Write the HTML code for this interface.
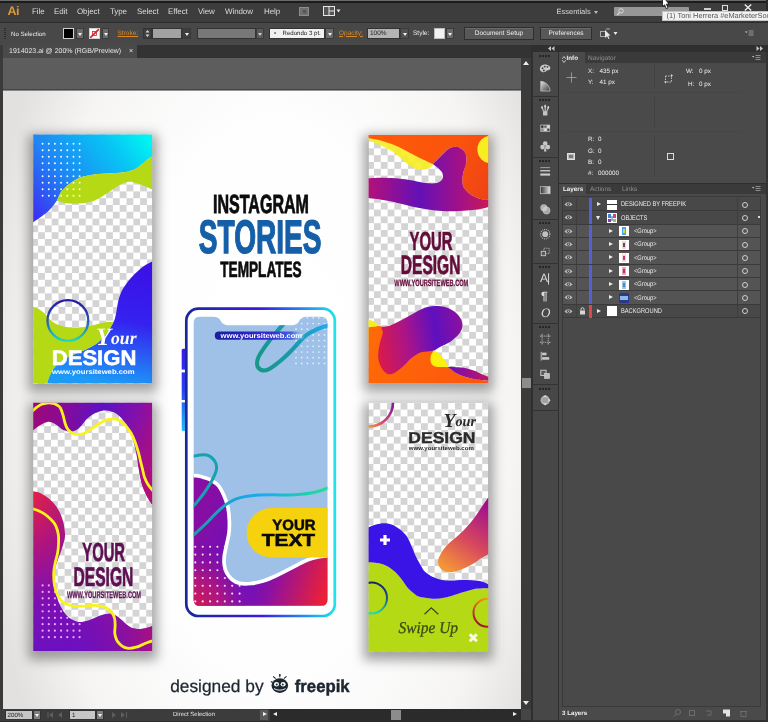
<!DOCTYPE html>
<html lang="en">
<head>
<meta charset="utf-8">
<title>Adobe Illustrator - 1914023.ai</title>
<style>
*{box-sizing:border-box;margin:0;padding:0}
html,body{text-rendering:geometricPrecision;width:768px;height:722px;overflow:hidden;background:#474747;font-family:"Liberation Sans",sans-serif;font-size:7px;color:#e4e4e4}
.abs{position:absolute}
#app{position:relative;width:768px;height:722px;overflow:hidden;background:#474747;opacity:.999}
/* top strips */
#topstrip{left:0;top:0;width:768px;height:3px;background:#1c1c1c;border-top:1.500px solid #6a6a6a}
#menubar{left:0;top:2.500px;width:768px;height:20px;background:#3d3d3d}
#menubar span{position:absolute;top:4px;font-size:8px;color:#dcdcdc;letter-spacing:-0.1px}
#ctrlbar{left:0;top:22px;width:768px;height:23px;background:#484848;border-top:1.500px solid #2c2c2c}
#tabbar{left:0;top:45px;width:531px;height:13px;background:#333}
#tab{left:3px;top:45px;width:134px;height:13px;background:#4a4a4a;font-size:7px;color:#e6e6e6;line-height:13px;padding-left:6px;white-space:nowrap}
#canvas{left:3px;top:58px;width:518px;height:651px;background:#5d5d5d;overflow:hidden}
#leftedge{left:0;top:45px;width:2.700px;height:677px;background:#3a3a3a}
#vscroll{left:521px;top:58px;width:10px;height:651px;background:#3b3b3b}
#statusbar{left:0;top:709px;width:531px;height:13px;background:#3c3c3c}
#dock{left:531px;top:45px;width:237px;height:677px;background:#323232}
#iconcol{left:533px;top:52px;width:25px;height:670px;background:#474747}
.panel{background:#4a4a4a}
.lbl{position:absolute;white-space:nowrap}

.dd{position:absolute;top:28px;height:11px;background:#6a6a6a;border:1px solid #3a3a3a}
.dd:after{content:"";position:absolute;left:50%;top:4px;margin-left:-2px;border:2px solid transparent;border-top:3px solid #f0f0f0;border-bottom:0}
.fld{position:absolute;top:28px;height:11px;border:1px solid #333}
.orange{position:absolute;top:29.800px;font-size:6.5px;color:#d88a2a;text-decoration:underline;white-space:nowrap}
.btn{position:absolute;top:27px;height:13px;background:#585858;border:1px solid #2e2e2e;box-shadow:inset 0 1px 0 #6a6a6a;font-size:6.5px;color:#f0f0f0;text-align:center;line-height:11px;white-space:nowrap}
.ct{position:absolute;font-size:6.5px;color:#ececec;white-space:nowrap}

.pt{position:absolute;font-size:6.3px;color:#f0f0f0;white-space:nowrap}
.dim{color:#8f8f8f;font-size:6.5px}
.row{position:absolute;left:563px;width:197px;height:13.35px;border-bottom:1px solid #3a3a3a;background:#484848}
.row.g{background:#545454}
.row .nm{position:absolute;top:3.3px;font-size:6.8px;color:#ededed;white-space:nowrap;transform:scaleX(.84);transform-origin:0 50%}
.row .bar{position:absolute;left:26px;top:0;width:3px;height:13px;background:#5560d4}
.row .eye{position:absolute;left:1px;top:3px;opacity:.8}
.row .tri{position:absolute;top:4px;border:2.5px solid transparent;border-left:4px solid #ececec;border-right:0}
.row .trid{position:absolute;top:5px;border:2.5px solid transparent;border-top:4px solid #ececec;border-bottom:0}
.row .th{position:absolute;top:1.5px;width:10px;height:10px;background:#fff;overflow:hidden}
.row .circ{position:absolute;left:178.5px;top:3.5px;width:6px;height:6px;border:1px solid #d0d0d0;border-radius:50%}
.row .vs{position:absolute;left:174px;top:0;width:1px;height:13px;background:#3d3d3d}
.row .vl{position:absolute;top:0;width:1px;height:13px;background:#3f3f3f}
</style>
</head>
<body>
<div id="app">
  <div id="topstrip" class="abs"></div>
  <div id="menubar" class="abs">
    <span style="left:7.500px;top:1.500px;font-size:12.500px;font-weight:bold;color:#dc9a3c;letter-spacing:-0.500px">Ai</span>
    <span style="left:32px">File</span>
    <span style="left:54px">Edit</span>
    <span style="left:77px">Object</span>
    <span style="left:110px">Type</span>
    <span style="left:137px">Select</span>
    <span style="left:168px">Effect</span>
    <span style="left:198px">View</span>
    <span style="left:225px">Window</span>
    <span style="left:264px">Help</span>
  </div>

  <div class="abs" style="left:299px;top:7px;width:10px;height:9px;background:#6e6e6e;border:1px solid #8c8c8c"><div style="position:absolute;left:3px;top:2px;width:3px;height:3px;background:#555"></div></div>
  <svg class="abs" style="left:323px;top:6px" width="20" height="10" viewBox="0 0 20 10"><rect x="0.5" y="0.5" width="11" height="9" fill="#555" stroke="#e6e6e6"/><path d="M6 0.5 v9 M6 5 h5.5" stroke="#e6e6e6" stroke-width="1"/><path d="M13.5 3.5 h4 l-2 3z" fill="#e6e6e6"/></svg>
  <div class="ct" style="left:556.5px;top:7px;font-size:7.5px;color:#d8d8d8">Essentials</div>
  <div class="abs" style="left:594px;top:11px;border:2px solid transparent;border-top:3px solid #bdbdbd;border-bottom:0"></div>
  <div class="abs" style="left:614px;top:7px;width:75px;height:9px;background:#979797;border-radius:1px"></div>
  <svg class="abs" style="left:616px;top:7px" width="9" height="9" viewBox="0 0 9 9"><circle cx="5" cy="3.8" r="2.2" fill="none" stroke="#d9d9d9" stroke-width="1"/><path d="M3.5 5.5 L1.2 8" stroke="#d9d9d9" stroke-width="1.2"/></svg>
  <div class="abs" style="left:704px;top:8px;width:7px;height:2px;background:#d0d0d0"></div>
  <div class="abs" style="left:721.5px;top:4.5px;width:6.5px;height:6px;border:1.5px solid #e0e0e0"></div>
  <svg class="abs" style="left:744px;top:4px" width="8" height="7" viewBox="0 0 8 7"><path d="M0.8 0.5 L7.2 6.5 M7.2 0.5 L0.8 6.5" stroke="#ededed" stroke-width="1.4"/></svg>
  <div class="abs" style="left:766px;top:0;width:2px;height:45px;background:#2b2b2b"></div>
  <div class="abs" style="left:662px;top:11px;width:106px;height:10px;background:#f1f1f1;border:1px solid #c4c4c4;border-right:0;font-size:7.4px;line-height:8.5px;color:#575757;padding-left:3.5px;white-space:nowrap;overflow:hidden">(1) Toni Herrera #eMarketerSoc</div>
  <svg class="abs" style="left:661px;top:0" width="9" height="10" viewBox="0 0 9 10"><path d="M1.5 -4 L1.5 6.5 L3.6 4.8 L5.2 8.6 L7 7.8 L5.3 4.2 L8 4 Z" fill="#fff" stroke="#111" stroke-width="0.8"/></svg>
  <div id="ctrlbar" class="abs"></div>
  
  <div class="abs" style="left:4px;top:28px;width:2px;height:12px;background:repeating-linear-gradient(#2c2c2c 0 1px,#484848 1px 2px)"></div>
  <div class="ct" style="left:11px;top:30.500px;font-size:6.100px">No Selection</div>
  <div class="fld" style="left:63px;width:11px;background:#000;border-color:#cfcfcf"></div>
  <div class="dd" style="left:76px;width:8px"></div>
  <div class="fld" style="left:89px;width:11px;background:#fff;border-color:#cfcfcf;overflow:hidden"><svg width="9" height="9" viewBox="0 0 9 9" style="position:absolute;left:0;top:0"><line x1="0" y1="9" x2="9" y2="0" stroke="#d8232a" stroke-width="1.6"/><rect x="2.5" y="2.5" width="4" height="4" fill="none" stroke="#d8232a" stroke-width="0.8"/></svg></div>
  <div class="dd" style="left:102px;width:7px"></div>
  <div class="orange" style="left:117.5px">Stroke:</div>
  <div class="fld" style="left:143px;width:9px;background:#3e3e3e"><svg width="7" height="9" viewBox="0 0 7 9" style="position:absolute;left:0;top:0"><path d="M1.5 3.5 L3.5 1 L5.5 3.5Z M1.5 5.5 L3.5 8 L5.5 5.5Z" fill="#d8d8d8"/></svg></div>
  <div class="fld" style="left:152px;width:30px;background:#a2a2a2"></div>
  <div class="dd" style="left:182px;width:9px;background:#3e3e3e"></div>
  <div class="fld" style="left:197px;width:59px;background:#787878"></div>
  <div class="dd" style="left:256px;width:8px;background:#5e5e5e;opacity:.8"></div>
  <div class="fld" style="left:269px;width:56px;background:#f1f1f1;color:#222;font-size:6.100px;line-height:9px;white-space:nowrap"><span style="position:absolute;left:4px">•</span><span style="position:absolute;left:12.500px">Redondo 3 pt.</span></div>
  <div class="dd" style="left:325px;width:9px"></div>
  <div class="orange" style="left:339px">Opacity:</div>
  <div class="fld" style="left:367px;width:33px;background:#b4b4b4;color:#1a1a1a;font-size:6.5px;line-height:9px;padding-left:2px">100%</div>
  <div class="dd" style="left:400px;width:9px;background:#505050"></div>
  <div class="ct" style="left:413px;top:30.300px">Style:</div>
  <div class="fld" style="left:434px;width:11px;background:#f2f2f2;border-color:#bbb"></div>
  <div class="dd" style="left:446px;width:8px"></div>
  <div class="btn" style="left:464px;width:70px">Document Setup</div>
  <div class="btn" style="left:540px;width:52px">Preferences</div>
  <svg class="abs" style="left:599px;top:28px" width="22" height="12" viewBox="0 0 22 12"><rect x="1.5" y="3.5" width="5" height="5" fill="none" stroke="#aaa" stroke-width="1"/><path d="M6 2 L6 10 L8 8.2 L9.5 11 L10.5 10.5 L9.2 7.8 L11.5 7.5Z" fill="#e8e8e8"/><path d="M7 1 h4 M9 1 v0" stroke="#aaa" stroke-width="1"/><path d="M14.5 4 h4 l-2 3z" fill="#e8e8e8"/></svg>
  <svg class="abs" style="left:745px;top:30px" width="10" height="7" viewBox="0 0 10 7"><path d="M0 1.5 h2.4 l-1.2 1.6z" fill="#ddd"/><path d="M3.5 1 h5 M3.5 3 h5 M3.5 5 h5" stroke="#b8b8b8" stroke-width="0.7"/></svg>
  <div id="tabbar" class="abs"></div>
  <div id="tab" class="abs">1914023.ai @ 200% (RGB/Preview) &nbsp;&nbsp;&nbsp;×</div>
  <div id="canvas" class="abs">
    <!--ART-START-->
<svg style="position:absolute;left:0;top:0;opacity:0.999" width="518" height="651" viewBox="3 58 518 651" font-family="Liberation Sans, sans-serif">
<defs>
<radialGradient id="bg" gradientUnits="userSpaceOnUse" cx="275" cy="400" r="300" gradientTransform="translate(275,400) scale(1,1.85) translate(-275,-400)"><stop offset="0" stop-color="#ffffff"/><stop offset="0.5" stop-color="#fefefe"/><stop offset="0.8" stop-color="#f6f5f4"/><stop offset="1" stop-color="#e3e1df"/></radialGradient>
<filter id="sh" x="-30%" y="-15%" width="160%" height="130%"><feGaussianBlur stdDeviation="6"/></filter>
<pattern id="ck1" patternUnits="userSpaceOnUse" x="38.1" y="232.2" width="13.600" height="13.600"><rect width="13.600" height="13.600" fill="#fff"/><rect width="6.800" height="6.800" fill="#d4d4d4"/><rect x="6.800" y="6.800" width="6.800" height="6.800" fill="#d4d4d4"/></pattern>
<pattern id="ck2" patternUnits="userSpaceOnUse" x="37.4" y="433" width="13.600" height="13.600"><rect width="13.600" height="13.600" fill="#fff"/><rect width="6.800" height="6.800" fill="#d4d4d4"/><rect x="6.800" y="6.800" width="6.800" height="6.800" fill="#d4d4d4"/></pattern>
<pattern id="ck3" patternUnits="userSpaceOnUse" x="367.2" y="148.4" width="13.600" height="13.600"><rect width="13.600" height="13.600" fill="#fff"/><rect width="6.800" height="6.800" fill="#d4d4d4"/><rect x="6.800" y="6.800" width="6.800" height="6.800" fill="#d4d4d4"/></pattern>
<pattern id="ck4" patternUnits="userSpaceOnUse" x="373.4" y="402.8" width="13.600" height="13.600"><rect width="13.600" height="13.600" fill="#fff"/><rect width="6.800" height="6.800" fill="#d4d4d4"/><rect x="6.800" y="6.800" width="6.800" height="6.800" fill="#d4d4d4"/></pattern>
<clipPath id="c1"><rect x="33.2" y="134.6" width="118.9" height="248.9"/></clipPath>
<clipPath id="c2"><rect x="33.2" y="402.8" width="118.9" height="248.2"/></clipPath>
<clipPath id="c3"><rect x="368.6" y="135" width="119.6" height="248"/></clipPath>
<clipPath id="c4"><rect x="368.6" y="402.8" width="119.6" height="248.4"/></clipPath>
<clipPath id="scr"><path id="scrp" d="M199.500 316.700 H213 Q219 316.700 220.500 320.500 Q222.500 325.200 229 325.200 H291 Q297.500 325.200 299.500 320.500 Q301 316.700 307 316.700 H321.500 Q327.500 316.700 327.500 322.700 V599.700 Q327.500 605.700 321.500 605.700 H199.500 Q193.700 605.700 193.700 599.700 V322.700 Q193.700 316.700 199.500 316.700Z"/></clipPath>
<linearGradient id="g1a" gradientUnits="userSpaceOnUse" x1="40" y1="225" x2="150" y2="140"><stop offset="0" stop-color="#3c2ef2"/><stop offset="0.35" stop-color="#1e86f4"/><stop offset="0.75" stop-color="#08c4f4"/><stop offset="1" stop-color="#00f6f2"/></linearGradient>
<linearGradient id="g1b" gradientUnits="userSpaceOnUse" x1="130" y1="270" x2="110" y2="383"><stop offset="0" stop-color="#3a12e6"/><stop offset="0.45" stop-color="#3522f0"/><stop offset="1" stop-color="#1c9af6"/></linearGradient>
<linearGradient id="g1c" gradientUnits="userSpaceOnUse" x1="68" y1="299" x2="68" y2="342"><stop offset="0" stop-color="#2a169c"/><stop offset="0.5" stop-color="#2a56b8"/><stop offset="1" stop-color="#1fe0c0"/></linearGradient>
<linearGradient id="g2a" gradientUnits="userSpaceOnUse" x1="33" y1="420" x2="153" y2="440"><stop offset="0" stop-color="#9c0878"/><stop offset="0.2" stop-color="#8c0a92"/><stop offset="0.55" stop-color="#5c12c4"/><stop offset="0.85" stop-color="#8610a8"/><stop offset="1" stop-color="#a20e8c"/></linearGradient>
<linearGradient id="g2a2" gradientUnits="userSpaceOnUse" x1="140" y1="420" x2="150" y2="505"><stop offset="0" stop-color="#a80e80" stop-opacity="0"/><stop offset="1" stop-color="#b80e70" stop-opacity="1"/></linearGradient>
<linearGradient id="g2b" gradientUnits="userSpaceOnUse" x1="40" y1="495" x2="75" y2="650"><stop offset="0" stop-color="#e0204a"/><stop offset="0.3" stop-color="#b0147c"/><stop offset="0.65" stop-color="#7c10b2"/><stop offset="1" stop-color="#6a10c0"/></linearGradient>
<linearGradient id="g2c" gradientUnits="userSpaceOnUse" x1="62" y1="645" x2="153" y2="628"><stop offset="0" stop-color="#7010b8" stop-opacity="0"/><stop offset="1" stop-color="#aa1080" stop-opacity="1"/></linearGradient>
<linearGradient id="g3o" gradientUnits="userSpaceOnUse" x1="369" y1="140" x2="488" y2="200"><stop offset="0" stop-color="#ff5a08"/><stop offset="0.6" stop-color="#fb540c"/><stop offset="1" stop-color="#ee4216"/></linearGradient>
<linearGradient id="g3p" gradientUnits="userSpaceOnUse" x1="369" y1="190" x2="488" y2="190"><stop offset="0" stop-color="#b4107a"/><stop offset="0.42" stop-color="#6410b8"/><stop offset="0.75" stop-color="#a0108a"/><stop offset="1" stop-color="#c81a58"/></linearGradient>
<linearGradient id="g3q" gradientUnits="userSpaceOnUse" x1="378" y1="345" x2="463" y2="330"><stop offset="0" stop-color="#d81a4c"/><stop offset="0.35" stop-color="#a8148a"/><stop offset="0.68" stop-color="#5e10be"/><stop offset="1" stop-color="#8c10a0"/></linearGradient>
<linearGradient id="g3t" gradientUnits="userSpaceOnUse" x1="447" y1="370" x2="489" y2="378"><stop offset="0" stop-color="#6a10b4"/><stop offset="0.5" stop-color="#9a1090"/><stop offset="1" stop-color="#c01862"/></linearGradient>
<linearGradient id="g3r" gradientUnits="userSpaceOnUse" x1="369" y1="330" x2="488" y2="383"><stop offset="0" stop-color="#ff6a08"/><stop offset="1" stop-color="#fb560c"/></linearGradient>
<linearGradient id="g4b" gradientUnits="userSpaceOnUse" x1="445" y1="568" x2="488" y2="505"><stop offset="0" stop-color="#f49638"/><stop offset="0.45" stop-color="#d84a5c"/><stop offset="1" stop-color="#a00e8e"/></linearGradient>
<linearGradient id="g4r1" gradientUnits="userSpaceOnUse" x1="390" y1="404" x2="369" y2="428"><stop offset="0" stop-color="#8a1a9c"/><stop offset="0.6" stop-color="#d8506a"/><stop offset="1" stop-color="#f4983a"/></linearGradient>
<linearGradient id="g4r2" gradientUnits="userSpaceOnUse" x1="372" y1="582" x2="372" y2="614"><stop offset="0" stop-color="#1a2468"/><stop offset="0.55" stop-color="#1e5a8a"/><stop offset="1" stop-color="#1fe0b8"/></linearGradient>
<linearGradient id="g4r3" gradientUnits="userSpaceOnUse" x1="487" y1="599" x2="474" y2="622"><stop offset="0" stop-color="#f4961a"/><stop offset="1" stop-color="#9c1430"/></linearGradient>
<linearGradient id="gph" gradientUnits="userSpaceOnUse" x1="186" y1="460" x2="336" y2="460"><stop offset="0" stop-color="#18289c"/><stop offset="0.5" stop-color="#3a1ae4"/><stop offset="0.8" stop-color="#2090f0"/><stop offset="1" stop-color="#1fe6ea"/></linearGradient>
<linearGradient id="gpb" gradientUnits="userSpaceOnUse" x1="183" y1="349" x2="183" y2="431"><stop offset="0" stop-color="#3c18ea"/><stop offset="0.5" stop-color="#2a40f2"/><stop offset="1" stop-color="#1fc0f4"/></linearGradient>
<linearGradient id="gpt" gradientUnits="userSpaceOnUse" x1="258" y1="350" x2="327" y2="326"><stop offset="0" stop-color="#16988a"/><stop offset="0.5" stop-color="#1a9ab0"/><stop offset="1" stop-color="#22a8ee"/></linearGradient>
<linearGradient id="gpl" gradientUnits="userSpaceOnUse" x1="194" y1="500" x2="327" y2="490"><stop offset="0" stop-color="#18a0a8"/><stop offset="0.5" stop-color="#1aaaf0"/><stop offset="1" stop-color="#20e090"/></linearGradient>
<linearGradient id="gpp" gradientUnits="userSpaceOnUse" x1="194" y1="540" x2="327" y2="585"><stop offset="0" stop-color="#860ea4"/><stop offset="0.42" stop-color="#6810c2"/><stop offset="0.62" stop-color="#8a10a4"/><stop offset="1" stop-color="#ea2038"/></linearGradient>
<radialGradient id="gpp2" gradientUnits="userSpaceOnUse" cx="192" cy="610" r="62"><stop offset="0" stop-color="#d81a4c" stop-opacity="1"/><stop offset="0.5" stop-color="#c4186a" stop-opacity="0.7"/><stop offset="1" stop-color="#a0148c" stop-opacity="0"/></radialGradient>
<linearGradient id="gurl" gradientUnits="userSpaceOnUse" x1="215" y1="335" x2="305" y2="335"><stop offset="0" stop-color="#1a1e9e"/><stop offset="0.6" stop-color="#3428d4"/><stop offset="0.85" stop-color="#3a58d8" stop-opacity="0.9"/><stop offset="1" stop-color="#a8d0f4" stop-opacity="0.2"/></linearGradient>
</defs>
<rect x="3" y="58" width="518" height="32" fill="#5d5d5d"/>
<rect x="3" y="90" width="518" height="619" fill="url(#bg)"/>
<rect x="3" y="89.5" width="518" height="1" fill="#2e2e2e"/>
<rect x="28.200000000000003" y="134.6" width="128.9" height="257.9" fill="#484848" opacity="0.5" filter="url(#sh)"/>
<rect x="28.200000000000003" y="402.8" width="128.9" height="257.2" fill="#484848" opacity="0.5" filter="url(#sh)"/>
<rect x="363.6" y="135" width="129.6" height="257" fill="#484848" opacity="0.5" filter="url(#sh)"/>
<rect x="363.6" y="402.8" width="129.6" height="257.4" fill="#484848" opacity="0.5" filter="url(#sh)"/>
<g clip-path="url(#c1)">
<rect x="33" y="134" width="120" height="250" fill="url(#ck1)"/>
<path d="M33 134 H153.500 V155.500 C152.0 156.6 147.4 159.8 144.5 162.0 C141.6 164.2 139.1 166.8 136.0 168.5 C132.9 170.2 130.0 171.2 126.0 172.0 C122.0 172.8 116.7 172.9 112.0 173.2 C107.3 173.5 102.0 173.6 98.0 174.0 C94.0 174.4 91.2 174.8 88.0 175.5 C84.8 176.2 81.7 176.9 79.0 178.0 C76.3 179.1 74.2 180.6 72.0 182.0 C69.8 183.4 67.8 185.0 66.0 186.7 C64.2 188.4 62.5 189.7 61.0 192.0 C59.5 194.3 57.7 199.1 57.0 200.5 C56.2 201.5 54.1 204.6 52.5 206.5 C50.9 208.4 49.4 210.2 47.3 212.0 C45.2 213.8 42.4 215.8 40.0 217.5 C37.6 219.2 34.2 221.7 33.0 222.5Z" fill="url(#g1a)"/>
<path d="M57.0 200.5 C57.7 199.1 59.5 194.3 61.0 192.0 C62.5 189.7 64.2 188.4 66.0 186.7 C67.8 185.0 69.8 183.4 72.0 182.0 C74.2 180.6 76.3 179.1 79.0 178.0 C81.7 176.9 84.8 176.2 88.0 175.5 C91.2 174.8 94.0 174.4 98.0 174.0 C102.0 173.6 107.3 173.5 112.0 173.2 C116.7 172.9 122.0 172.8 126.0 172.0 C130.0 171.2 132.9 170.2 136.0 168.5 C139.1 166.8 141.6 164.2 144.5 162.0 C147.4 159.8 152.0 156.6 153.5 155.5 L153.500 190 C152.2 189.5 148.4 187.8 146.0 186.8 C143.6 185.8 141.2 184.8 139.0 184.0 C136.8 183.2 134.9 182.5 133.0 182.2 C131.1 181.9 129.9 181.6 127.7 182.0 C125.5 182.4 122.5 183.6 120.0 184.8 C117.5 186.1 115.2 187.9 112.7 189.5 C110.2 191.1 107.5 192.9 105.0 194.5 C102.5 196.1 100.5 197.8 98.0 199.0 C95.5 200.2 93.2 201.2 90.0 202.0 C86.8 202.8 83.0 203.3 79.0 203.5 C75.0 203.7 69.7 203.8 66.0 203.3 C62.3 202.8 58.5 201.0 57.0 200.5Z" fill="#b6d916"/>
<g fill="#f4fbff"><circle cx="42.6" cy="143.7" r="0.95"/><circle cx="48.8" cy="143.7" r="0.95"/><circle cx="54.9" cy="143.7" r="0.95"/><circle cx="61.1" cy="143.7" r="0.95"/><circle cx="67.3" cy="143.7" r="0.95"/><circle cx="73.5" cy="143.7" r="0.95"/><circle cx="79.6" cy="143.7" r="0.95"/><circle cx="42.6" cy="150.2" r="0.95"/><circle cx="48.8" cy="150.2" r="0.95"/><circle cx="54.9" cy="150.2" r="0.95"/><circle cx="61.1" cy="150.2" r="0.95"/><circle cx="67.3" cy="150.2" r="0.95"/><circle cx="73.5" cy="150.2" r="0.95"/><circle cx="79.6" cy="150.2" r="0.95"/><circle cx="42.6" cy="156.7" r="0.95"/><circle cx="48.8" cy="156.7" r="0.95"/><circle cx="54.9" cy="156.7" r="0.95"/><circle cx="61.1" cy="156.7" r="0.95"/><circle cx="67.3" cy="156.7" r="0.95"/><circle cx="73.5" cy="156.7" r="0.95"/><circle cx="79.6" cy="156.7" r="0.95"/><circle cx="42.6" cy="163.2" r="0.95"/><circle cx="48.8" cy="163.2" r="0.95"/><circle cx="54.9" cy="163.2" r="0.95"/><circle cx="61.1" cy="163.2" r="0.95"/><circle cx="67.3" cy="163.2" r="0.95"/><circle cx="73.5" cy="163.2" r="0.95"/><circle cx="79.6" cy="163.2" r="0.95"/><circle cx="42.6" cy="169.7" r="0.95"/><circle cx="48.8" cy="169.7" r="0.95"/><circle cx="54.9" cy="169.7" r="0.95"/><circle cx="61.1" cy="169.7" r="0.95"/><circle cx="67.3" cy="169.7" r="0.95"/><circle cx="73.5" cy="169.7" r="0.95"/><circle cx="79.6" cy="169.7" r="0.95"/><circle cx="42.6" cy="176.2" r="0.95"/><circle cx="48.8" cy="176.2" r="0.95"/><circle cx="54.9" cy="176.2" r="0.95"/><circle cx="61.1" cy="176.2" r="0.95"/><circle cx="67.3" cy="176.2" r="0.95"/><circle cx="73.5" cy="176.2" r="0.95"/><circle cx="79.6" cy="176.2" r="0.95"/><circle cx="42.6" cy="182.7" r="0.95"/><circle cx="48.8" cy="182.7" r="0.95"/><circle cx="54.9" cy="182.7" r="0.95"/><circle cx="61.1" cy="182.7" r="0.95"/><circle cx="67.3" cy="182.7" r="0.95"/><circle cx="73.5" cy="182.7" r="0.95"/><circle cx="79.6" cy="182.7" r="0.95"/><circle cx="42.6" cy="189.2" r="0.95"/><circle cx="48.8" cy="189.2" r="0.95"/><circle cx="54.9" cy="189.2" r="0.95"/><circle cx="61.1" cy="189.2" r="0.95"/><circle cx="67.3" cy="189.2" r="0.95"/><circle cx="73.5" cy="189.2" r="0.95"/><circle cx="79.6" cy="189.2" r="0.95"/><circle cx="42.6" cy="195.7" r="0.95"/><circle cx="48.8" cy="195.7" r="0.95"/><circle cx="54.9" cy="195.7" r="0.95"/><circle cx="61.1" cy="195.7" r="0.95"/><circle cx="67.3" cy="195.7" r="0.95"/><circle cx="73.5" cy="195.7" r="0.95"/><circle cx="79.6" cy="195.7" r="0.95"/></g>
<path d="M153.5 261.0 C151.9 261.8 147.1 263.9 144.0 266.0 C140.9 268.1 137.7 271.1 135.0 273.7 C132.3 276.3 130.2 278.7 128.0 281.5 C125.8 284.3 123.6 287.4 122.0 290.5 C120.4 293.6 119.4 296.6 118.5 300.0 C117.6 303.4 117.1 307.8 116.5 311.0 C115.9 314.2 115.5 316.7 114.8 319.0 C114.0 321.3 113.5 322.5 112.0 325.0 C110.5 327.5 108.4 331.0 106.0 334.0 C103.6 337.0 101.0 340.3 97.8 342.8 C94.6 345.3 90.8 347.1 87.0 349.0 C83.2 350.9 79.0 352.2 75.0 354.0 C71.0 355.8 66.4 357.8 63.0 360.0 C59.6 362.2 57.0 364.5 54.8 367.0 C52.6 369.5 51.3 372.2 50.0 375.0 C48.7 377.8 47.5 382.1 47.0 383.5 L153.500 383.500Z" fill="url(#g1b)"/>
<path d="M33.0 307.0 C33.8 307.2 36.0 307.8 37.5 308.5 C39.0 309.2 40.2 309.8 41.7 311.0 C43.2 312.2 45.0 313.9 46.5 315.5 C48.0 317.1 49.1 318.8 51.0 320.4 C52.9 321.9 55.5 323.7 58.0 324.8 C60.5 325.9 63.2 326.5 66.0 327.0 C68.8 327.5 71.9 327.8 75.0 327.8 C78.1 327.8 81.7 327.4 84.7 327.0 C87.7 326.6 90.2 325.9 93.0 325.2 C95.8 324.5 99.2 323.5 101.5 323.0 C103.8 322.5 105.1 322.2 107.0 322.0 C108.9 321.8 112.0 322.0 113.0 322.0 C112.8 322.5 113.2 323.0 112.0 325.0 C110.8 327.0 108.4 331.0 106.0 334.0 C103.6 337.0 101.0 340.3 97.8 342.8 C94.6 345.3 90.8 347.1 87.0 349.0 C83.2 350.9 79.0 352.2 75.0 354.0 C71.0 355.8 66.4 357.8 63.0 360.0 C59.6 362.2 57.0 364.5 54.8 367.0 C52.6 369.5 51.3 372.2 50.0 375.0 C48.7 377.8 47.5 382.1 47.0 383.5 L33 383.500Z" fill="#b6d916"/>
<circle cx="67.900" cy="320.500" r="20.400" fill="none" stroke="url(#g1c)" stroke-width="2.300"/>
<text x="96" y="343.600" font-family="Liberation Serif, serif" font-style="italic" font-weight="bold" font-size="18" fill="#fff" textLength="40.500" lengthAdjust="spacingAndGlyphs"><tspan font-size="25" dy="1.500">Y</tspan><tspan dy="-1.500">our</tspan></text>
<text x="51.800" y="365.300" font-weight="bold" font-size="21" fill="#fff" stroke="#fff" stroke-width="0.600" textLength="84.500" lengthAdjust="spacingAndGlyphs">DESIGN</text>
<text x="52" y="373.900" font-weight="bold" font-size="6.800" fill="#fff" textLength="82.500" lengthAdjust="spacingAndGlyphs">www.yoursiteweb.com</text>
</g>
<g clip-path="url(#c2)">
<rect x="33" y="402" width="120" height="250" fill="url(#ck2)"/>
<path d="M33 402 H153.500 V506 C152.9 505.2 151.2 503.4 150.0 501.5 C148.8 499.6 147.2 497.0 146.0 494.5 C144.8 492.0 143.5 489.3 142.6 486.6 C141.7 483.9 141.1 481.3 140.5 478.5 C139.9 475.7 139.5 473.1 138.9 469.8 C138.3 466.5 137.8 462.2 137.2 458.5 C136.5 454.8 135.9 451.0 135.0 447.3 C134.1 443.6 133.2 439.9 132.0 436.5 C130.8 433.1 129.4 429.9 127.7 426.8 C126.0 423.8 123.7 420.5 121.5 418.2 C119.3 415.9 116.8 414.1 114.6 412.8 C112.3 411.6 110.2 411.0 108.0 410.7 C105.8 410.4 103.9 410.3 101.5 410.9 C99.1 411.4 96.0 412.6 93.5 414.0 C91.0 415.4 88.4 417.5 86.5 419.3 C84.6 421.1 83.5 423.3 82.0 425.0 C80.5 426.7 78.8 428.5 77.2 429.6 C75.6 430.7 74.0 431.1 72.5 431.4 C71.0 431.7 69.7 431.8 67.9 431.4 C66.2 431.0 63.9 430.3 62.0 429.2 C60.1 428.1 58.3 426.1 56.6 425.0 C54.9 423.9 53.5 423.1 52.0 422.6 C50.5 422.1 49.3 421.6 47.3 422.0 C45.3 422.4 42.4 423.9 40.0 425.3 C37.6 426.7 34.2 429.6 33.0 430.5Z" fill="url(#g2a)"/>
<path d="M33 402 H153.500 V506 C152.9 505.2 151.2 503.4 150.0 501.5 C148.8 499.6 147.2 497.0 146.0 494.5 C144.8 492.0 143.5 489.3 142.6 486.6 C141.7 483.9 141.1 481.3 140.5 478.5 C139.9 475.7 139.5 473.1 138.9 469.8 C138.3 466.5 137.8 462.2 137.2 458.5 C136.5 454.8 135.9 451.0 135.0 447.3 C134.1 443.6 133.2 439.9 132.0 436.5 C130.8 433.1 129.4 429.9 127.7 426.8 C126.0 423.8 123.7 420.5 121.5 418.2 C119.3 415.9 116.8 414.1 114.6 412.8 C112.3 411.6 110.2 411.0 108.0 410.7 C105.8 410.4 103.9 410.3 101.5 410.9 C99.1 411.4 96.0 412.6 93.5 414.0 C91.0 415.4 88.4 417.5 86.5 419.3 C84.6 421.1 83.5 423.3 82.0 425.0 C80.5 426.7 78.8 428.5 77.2 429.6 C75.6 430.7 74.0 431.1 72.5 431.4 C71.0 431.7 69.7 431.8 67.9 431.4 C66.2 431.0 63.9 430.3 62.0 429.2 C60.1 428.1 58.3 426.1 56.6 425.0 C54.9 423.9 53.5 423.1 52.0 422.6 C50.5 422.1 49.3 421.6 47.3 422.0 C45.3 422.4 42.4 423.9 40.0 425.3 C37.6 426.7 34.2 429.6 33.0 430.5Z" fill="url(#g2a2)"/>
<path d="M33.0 491.3 C34.0 491.5 36.9 491.7 39.0 492.5 C41.1 493.3 43.3 494.6 45.4 496.0 C47.5 497.4 49.6 499.2 51.5 501.0 C53.4 502.8 55.1 504.8 56.6 507.0 C58.1 509.2 59.4 511.5 60.5 514.0 C61.6 516.5 62.5 519.5 63.2 522.0 C63.9 524.5 64.2 526.7 64.5 529.0 C64.8 531.3 65.2 533.4 65.0 536.0 C64.8 538.6 64.0 541.7 63.2 544.5 C62.4 547.3 61.4 550.1 60.4 553.0 C59.4 555.9 57.9 558.9 57.0 562.0 C56.1 565.1 55.2 568.0 54.8 571.7 C54.4 575.4 54.2 580.0 54.5 584.0 C54.8 588.0 55.6 592.3 56.6 596.0 C57.6 599.7 58.9 602.9 60.5 606.0 C62.1 609.1 64.1 612.5 66.0 614.7 C67.9 617.0 69.8 618.3 72.0 619.5 C74.2 620.7 76.2 621.8 79.0 622.0 C81.8 622.2 85.4 621.4 88.5 620.5 C91.6 619.6 95.1 617.6 97.8 616.6 C100.5 615.6 102.3 614.8 104.5 614.3 C106.7 613.8 108.9 613.5 110.9 613.8 C112.9 614.1 114.7 614.9 116.5 616.0 C118.3 617.1 120.3 618.9 122.0 620.3 C123.7 621.7 124.9 623.2 126.5 624.5 C128.1 625.8 129.7 627.0 131.4 627.8 C133.2 628.5 135.1 628.9 137.0 629.0 C138.9 629.1 140.8 629.0 142.6 628.7 C144.4 628.5 146.2 628.0 148.0 627.5 C149.8 627.0 152.6 625.8 153.5 625.5 L153.500 651 L33 651Z" fill="url(#g2b)"/>
<path d="M33.0 491.3 C34.0 491.5 36.9 491.7 39.0 492.5 C41.1 493.3 43.3 494.6 45.4 496.0 C47.5 497.4 49.6 499.2 51.5 501.0 C53.4 502.8 55.1 504.8 56.6 507.0 C58.1 509.2 59.4 511.5 60.5 514.0 C61.6 516.5 62.5 519.5 63.2 522.0 C63.9 524.5 64.2 526.7 64.5 529.0 C64.8 531.3 65.2 533.4 65.0 536.0 C64.8 538.6 64.0 541.7 63.2 544.5 C62.4 547.3 61.4 550.1 60.4 553.0 C59.4 555.9 57.9 558.9 57.0 562.0 C56.1 565.1 55.2 568.0 54.8 571.7 C54.4 575.4 54.2 580.0 54.5 584.0 C54.8 588.0 55.6 592.3 56.6 596.0 C57.6 599.7 58.9 602.9 60.5 606.0 C62.1 609.1 64.1 612.5 66.0 614.7 C67.9 617.0 69.8 618.3 72.0 619.5 C74.2 620.7 76.2 621.8 79.0 622.0 C81.8 622.2 85.4 621.4 88.5 620.5 C91.6 619.6 95.1 617.6 97.8 616.6 C100.5 615.6 102.3 614.8 104.5 614.3 C106.7 613.8 108.9 613.5 110.9 613.8 C112.9 614.1 114.7 614.9 116.5 616.0 C118.3 617.1 120.3 618.9 122.0 620.3 C123.7 621.7 124.9 623.2 126.5 624.5 C128.1 625.8 129.7 627.0 131.4 627.8 C133.2 628.5 135.1 628.9 137.0 629.0 C138.9 629.1 140.8 629.0 142.6 628.7 C144.4 628.5 146.2 628.0 148.0 627.5 C149.8 627.0 152.6 625.8 153.5 625.5 L153.500 651 L33 651Z" fill="url(#g2c)"/>
<clipPath id="c2b"><path d="M33.0 491.3 C34.0 491.5 36.9 491.7 39.0 492.5 C41.1 493.3 43.3 494.6 45.4 496.0 C47.5 497.4 49.6 499.2 51.5 501.0 C53.4 502.8 55.1 504.8 56.6 507.0 C58.1 509.2 59.4 511.5 60.5 514.0 C61.6 516.5 62.5 519.5 63.2 522.0 C63.9 524.5 64.2 526.7 64.5 529.0 C64.8 531.3 65.2 533.4 65.0 536.0 C64.8 538.6 64.0 541.7 63.2 544.5 C62.4 547.3 61.4 550.1 60.4 553.0 C59.4 555.9 57.9 558.9 57.0 562.0 C56.1 565.1 55.2 568.0 54.8 571.7 C54.4 575.4 54.2 580.0 54.5 584.0 C54.8 588.0 55.6 592.3 56.6 596.0 C57.6 599.7 58.9 602.9 60.5 606.0 C62.1 609.1 64.1 612.5 66.0 614.7 C67.9 617.0 69.8 618.3 72.0 619.5 C74.2 620.7 76.2 621.8 79.0 622.0 C81.8 622.2 85.4 621.4 88.5 620.5 C91.6 619.6 95.1 617.6 97.8 616.6 C100.5 615.6 102.3 614.8 104.5 614.3 C106.7 613.8 108.9 613.5 110.9 613.8 C112.9 614.1 114.7 614.9 116.5 616.0 C118.3 617.1 120.3 618.9 122.0 620.3 C123.7 621.7 124.9 623.2 126.5 624.5 C128.1 625.8 129.7 627.0 131.4 627.8 C133.2 628.5 135.1 628.9 137.0 629.0 C138.9 629.1 140.8 629.0 142.6 628.7 C144.4 628.5 146.2 628.0 148.0 627.5 C149.8 627.0 152.6 625.8 153.5 625.5 L153.500 651 L33 651Z"/></clipPath>
<g clip-path="url(#c2b)"><g fill="#f4a4f2"><circle cx="42.6" cy="585.4" r="1.1"/><circle cx="48.8" cy="585.4" r="1.1"/><circle cx="54.9" cy="585.4" r="1.1"/><circle cx="61.1" cy="585.4" r="1.1"/><circle cx="67.3" cy="585.4" r="1.1"/><circle cx="73.5" cy="585.4" r="1.1"/><circle cx="79.6" cy="585.4" r="1.1"/><circle cx="42.6" cy="591.9" r="1.1"/><circle cx="48.8" cy="591.9" r="1.1"/><circle cx="54.9" cy="591.9" r="1.1"/><circle cx="61.1" cy="591.9" r="1.1"/><circle cx="67.3" cy="591.9" r="1.1"/><circle cx="73.5" cy="591.9" r="1.1"/><circle cx="79.6" cy="591.9" r="1.1"/><circle cx="42.6" cy="598.3" r="1.1"/><circle cx="48.8" cy="598.3" r="1.1"/><circle cx="54.9" cy="598.3" r="1.1"/><circle cx="61.1" cy="598.3" r="1.1"/><circle cx="67.3" cy="598.3" r="1.1"/><circle cx="73.5" cy="598.3" r="1.1"/><circle cx="79.6" cy="598.3" r="1.1"/><circle cx="42.6" cy="604.8" r="1.1"/><circle cx="48.8" cy="604.8" r="1.1"/><circle cx="54.9" cy="604.8" r="1.1"/><circle cx="61.1" cy="604.8" r="1.1"/><circle cx="67.3" cy="604.8" r="1.1"/><circle cx="73.5" cy="604.8" r="1.1"/><circle cx="79.6" cy="604.8" r="1.1"/><circle cx="42.6" cy="611.3" r="1.1"/><circle cx="48.8" cy="611.3" r="1.1"/><circle cx="54.9" cy="611.3" r="1.1"/><circle cx="61.1" cy="611.3" r="1.1"/><circle cx="67.3" cy="611.3" r="1.1"/><circle cx="73.5" cy="611.3" r="1.1"/><circle cx="79.6" cy="611.3" r="1.1"/><circle cx="42.6" cy="617.8" r="1.1"/><circle cx="48.8" cy="617.8" r="1.1"/><circle cx="54.9" cy="617.8" r="1.1"/><circle cx="61.1" cy="617.8" r="1.1"/><circle cx="67.3" cy="617.8" r="1.1"/><circle cx="73.5" cy="617.8" r="1.1"/><circle cx="79.6" cy="617.8" r="1.1"/><circle cx="42.6" cy="624.2" r="1.1"/><circle cx="48.8" cy="624.2" r="1.1"/><circle cx="54.9" cy="624.2" r="1.1"/><circle cx="61.1" cy="624.2" r="1.1"/><circle cx="67.3" cy="624.2" r="1.1"/><circle cx="73.5" cy="624.2" r="1.1"/><circle cx="79.6" cy="624.2" r="1.1"/><circle cx="42.6" cy="630.7" r="1.1"/><circle cx="48.8" cy="630.7" r="1.1"/><circle cx="54.9" cy="630.7" r="1.1"/><circle cx="61.1" cy="630.7" r="1.1"/><circle cx="67.3" cy="630.7" r="1.1"/><circle cx="73.5" cy="630.7" r="1.1"/><circle cx="79.6" cy="630.7" r="1.1"/><circle cx="42.6" cy="637.2" r="1.1"/><circle cx="48.8" cy="637.2" r="1.1"/><circle cx="54.9" cy="637.2" r="1.1"/><circle cx="61.1" cy="637.2" r="1.1"/><circle cx="67.3" cy="637.2" r="1.1"/><circle cx="73.5" cy="637.2" r="1.1"/><circle cx="79.6" cy="637.2" r="1.1"/></g></g>
<path d="M32.0 411.5 C32.8 410.8 35.4 408.4 37.0 407.2 C38.6 406.0 40.0 405.0 41.7 404.3 C43.4 403.6 45.1 403.2 47.0 403.0 C48.9 402.8 51.2 403.0 52.9 403.3 C54.6 403.6 55.8 404.2 57.0 405.0 C58.2 405.8 59.4 406.3 60.4 408.0 C61.4 409.7 62.2 412.5 63.0 415.0 C63.8 417.5 64.3 420.8 65.0 423.0 C65.7 425.2 66.2 426.6 67.0 428.0 C67.8 429.4 68.5 430.4 69.7 431.4 C70.9 432.4 72.5 433.5 74.0 434.0 C75.5 434.5 77.2 434.8 79.0 434.6 C80.8 434.4 83.1 433.8 85.0 433.0 C86.9 432.2 88.3 430.9 90.3 429.6 C92.3 428.3 94.8 426.4 97.0 425.0 C99.2 423.6 101.4 422.1 103.4 421.2 C105.4 420.2 107.1 419.7 109.0 419.3 C110.9 418.9 112.7 418.6 114.6 418.9 C116.5 419.2 118.6 420.0 120.5 421.2 C122.4 422.4 124.0 423.8 125.8 425.8 C127.5 427.8 129.5 430.4 131.0 433.0 C132.5 435.6 133.8 438.5 135.0 441.7 C136.2 444.9 137.3 448.6 138.3 452.0 C139.3 455.4 140.1 459.3 140.8 462.3 C141.5 465.3 142.1 467.5 142.7 470.0 C143.3 472.5 143.6 474.8 144.5 477.2 C145.4 479.6 146.4 482.0 148.0 484.5 C149.6 487.0 153.0 490.8 154.0 492.0" fill="none" stroke="#f9f21c" stroke-width="2.800"/>
<path d="M32.0 508.5 C33.2 508.9 36.8 510.0 39.0 511.0 C41.2 512.0 43.5 513.3 45.4 514.6 C47.3 515.9 48.9 517.4 50.5 519.0 C52.1 520.6 53.7 522.2 54.8 524.0 C55.9 525.8 56.7 528.0 57.3 530.0 C57.9 532.0 58.3 533.6 58.5 536.0 C58.7 538.4 58.6 541.7 58.5 544.5 C58.4 547.3 58.1 550.0 57.6 553.0 C57.1 556.0 55.9 559.4 55.3 562.5 C54.7 565.6 54.0 568.5 53.8 571.7 C53.6 574.9 53.7 578.4 54.0 581.5 C54.3 584.6 55.0 587.9 55.7 590.4 C56.4 592.9 57.3 594.7 58.4 596.6 C59.5 598.5 60.7 600.2 62.3 601.6 C63.9 603.0 66.0 604.0 68.2 604.8 C70.4 605.6 72.6 606.1 75.3 606.3 C78.0 606.5 81.4 606.2 84.5 606.1 C87.6 606.0 91.2 605.4 94.0 605.4 C96.8 605.4 98.8 605.5 101.0 606.0 C103.2 606.5 105.2 607.1 107.0 608.2 C108.8 609.3 110.4 610.7 111.7 612.4 C113.0 614.1 114.0 616.2 114.6 618.5 C115.2 620.8 115.1 623.5 115.1 626.0 C115.1 628.5 114.5 631.1 114.8 633.4 C115.0 635.7 115.7 637.9 116.6 639.8 C117.5 641.7 118.9 643.3 120.2 644.6 C121.5 645.9 123.0 646.8 124.5 647.4 C126.0 648.0 127.5 648.4 129.5 648.4 C131.4 648.4 134.0 647.8 136.2 647.2 C138.4 646.6 140.7 645.4 142.6 644.6 C144.5 643.8 145.7 643.2 147.6 642.5 C149.5 641.8 152.9 640.7 154.0 640.3" fill="none" stroke="#f9f21c" stroke-width="2.800"/>
<text x="82.300" y="561.400" font-weight="bold" font-size="26" fill="#5c1052" stroke="#5c1052" stroke-width="0.700" textLength="42.700" lengthAdjust="spacingAndGlyphs">YOUR</text>
<text x="73.400" y="585.700" font-weight="bold" font-size="26.800" fill="#5c1052" stroke="#5c1052" stroke-width="0.700" textLength="60" lengthAdjust="spacingAndGlyphs">DESIGN</text>
<text x="66.900" y="598.300" font-weight="bold" font-size="9.600" fill="#5c1052" stroke="#5c1052" stroke-width="0.250" textLength="74.200" lengthAdjust="spacingAndGlyphs">WWW.YOURSITEWEB.COM</text>
</g>
<g clip-path="url(#c3)">
<rect x="368.500" y="135" width="120" height="248" fill="url(#ck3)"/>
<path d="M366.0 137.5 C364.4 138.3 373.7 142.1 376.7 143.7 C379.7 145.3 381.5 145.8 384.0 147.0 C386.5 148.2 389.4 149.6 391.6 151.0 C393.9 152.4 395.6 153.9 397.5 155.5 C399.4 157.1 401.3 159.1 403.0 160.5 C404.7 161.9 406.0 163.1 407.5 164.2 C409.0 165.3 410.5 166.2 412.0 167.0 C413.5 167.8 414.9 168.5 416.5 169.0 C418.1 169.5 419.8 170.0 421.5 170.0 C423.2 170.0 425.1 169.6 427.0 168.8 C428.9 168.0 432.6 167.0 432.8 165.0 C433.0 163.0 431.1 159.5 428.0 157.0 C424.9 154.5 418.7 152.3 414.0 150.0 C409.3 147.7 404.7 144.8 400.0 143.0 C395.3 141.2 391.7 139.9 386.0 139.0 C380.3 138.1 367.6 136.7 366.0 137.5Z" fill="#f7ee22" fill-opacity="0.900"/>
<path d="M368 135 H489 V199.800 C488.2 199.8 485.6 199.8 484.0 199.6 C482.4 199.4 481.1 199.3 479.5 198.8 C477.9 198.3 476.1 197.6 474.5 196.8 C472.9 196.0 471.5 195.1 470.0 194.0 C468.5 192.9 466.7 191.5 465.5 190.0 C464.3 188.5 463.2 186.7 462.7 184.8 C462.2 182.9 462.1 180.7 462.3 178.5 C462.5 176.3 463.0 174.1 463.6 171.7 C464.2 169.3 465.5 166.5 466.0 164.0 C466.5 161.5 466.6 158.8 466.4 156.8 C466.2 154.8 465.5 153.4 464.6 152.0 C463.7 150.6 462.2 149.3 460.8 148.4 C459.4 147.5 457.9 147.0 456.3 146.8 C454.8 146.6 453.1 146.8 451.5 147.4 C449.9 148.0 448.1 149.2 446.5 150.5 C444.9 151.8 443.5 153.5 442.0 155.0 C440.5 156.5 439.0 158.0 437.5 159.5 C436.0 161.0 433.6 163.2 432.8 164.0 C431.2 163.3 426.6 161.3 423.5 159.8 C420.4 158.3 417.2 156.6 414.0 155.0 C410.8 153.4 407.6 151.6 404.5 150.0 C401.4 148.4 398.1 146.7 395.4 145.5 C392.7 144.3 390.7 143.8 388.5 143.0 C386.3 142.2 384.6 141.6 382.3 141.0 C380.1 140.4 377.4 139.8 375.0 139.3 C372.6 138.8 369.2 138.2 368.0 138.0Z" fill="url(#g3o)"/>
<circle cx="491.400" cy="149.500" r="14" fill="#f7ee22"/>
<path d="M368.0 178.3 C370.2 178.2 376.4 177.8 381.0 177.8 C385.6 177.8 390.9 178.0 395.4 178.3 C399.9 178.6 403.9 179.2 408.0 179.8 C412.1 180.4 416.3 181.4 419.7 182.0 C423.1 182.6 425.7 183.1 428.5 183.3 C431.3 183.5 434.4 183.5 436.5 183.0 C438.6 182.5 440.2 181.6 441.3 180.5 C442.4 179.4 442.8 177.7 443.0 176.4 C443.2 175.2 443.0 174.1 442.5 173.0 C442.0 171.9 441.0 171.0 440.0 170.0 C439.0 169.0 437.7 167.8 436.5 166.8 C435.3 165.8 433.4 164.5 432.8 164.0 C433.6 163.2 436.0 161.0 437.5 159.5 C439.0 158.0 440.5 156.5 442.0 155.0 C443.5 153.5 444.9 151.8 446.5 150.5 C448.1 149.2 449.9 148.0 451.5 147.4 C453.1 146.8 454.8 146.6 456.3 146.8 C457.9 147.0 459.4 147.5 460.8 148.4 C462.2 149.3 463.7 150.6 464.6 152.0 C465.5 153.4 466.2 154.8 466.4 156.8 C466.6 158.8 466.5 161.5 466.0 164.0 C465.5 166.5 464.2 169.3 463.6 171.7 C463.0 174.1 462.5 176.3 462.3 178.5 C462.1 180.7 462.2 182.9 462.7 184.8 C463.2 186.7 464.3 188.5 465.5 190.0 C466.7 191.5 468.5 192.9 470.0 194.0 C471.5 195.1 472.9 196.0 474.5 196.8 C476.1 197.6 477.9 198.3 479.5 198.8 C481.1 199.3 482.4 199.4 484.0 199.6 C485.6 199.8 488.2 199.8 489.0 199.8 L489 207 C487.5 207.3 483.2 208.4 480.0 209.0 C476.8 209.6 474.0 209.9 470.0 210.3 C466.0 210.7 460.7 211.1 456.0 211.2 C451.3 211.3 446.7 211.3 442.0 211.0 C437.3 210.7 432.7 210.2 428.0 209.5 C423.3 208.8 418.7 208.0 414.0 207.0 C409.3 206.0 404.7 204.6 400.0 203.5 C395.3 202.4 389.8 201.2 386.0 200.5 C382.2 199.8 380.0 199.4 377.0 199.0 C374.0 198.6 369.5 198.1 368.0 197.9Z" fill="url(#g3p)"/>
<text x="409.500" y="250" font-weight="bold" font-size="26" fill="#640c3a" stroke="#640c3a" stroke-width="0.700" textLength="43" lengthAdjust="spacingAndGlyphs">YOUR</text>
<text x="400.800" y="273.800" font-weight="bold" font-size="26.600" fill="#640c3a" stroke="#640c3a" stroke-width="0.700" textLength="59.600" lengthAdjust="spacingAndGlyphs">DESIGN</text>
<text x="394.300" y="285.500" font-weight="bold" font-size="9.200" fill="#640c3a" stroke="#640c3a" stroke-width="0.250" textLength="74" lengthAdjust="spacingAndGlyphs">WWW.YOURSITEWEB.COM</text>
<circle cx="368.500" cy="332" r="12" fill="#f7ee22"/>
<path d="M432.300 350 Q440 352.500 444.500 359.500 Q447.500 364 449 368.500 L430 369 L428 352Z" fill="#f9f010"/>
<path d="M368.0 327.3 C369.2 327.2 372.7 326.8 375.0 326.8 C377.3 326.8 378.7 324.3 382.0 327.3 C385.3 330.3 390.3 340.9 395.0 345.0 C399.7 349.1 405.2 351.0 410.0 352.0 C414.8 353.0 420.2 351.2 424.0 351.0 C427.8 350.8 431.6 350.1 432.8 350.8 C434.0 351.5 431.4 353.3 431.0 355.0 C430.6 356.7 430.3 359.4 430.5 361.0 C430.7 362.6 431.2 363.6 432.0 364.5 C432.8 365.4 433.5 366.0 435.0 366.4 C436.5 366.8 438.9 366.9 441.0 367.0 C443.1 367.1 445.9 366.7 447.7 367.2 C449.4 367.7 450.2 368.9 451.5 369.8 C452.8 370.7 453.8 371.7 455.5 372.7 C457.2 373.7 459.6 374.8 462.0 375.7 C464.4 376.6 466.9 377.3 469.6 378.0 C472.3 378.7 474.8 379.3 478.0 379.8 C481.2 380.3 487.2 380.8 489.0 381.0 L489 384 L368 384Z" fill="url(#g3r)"/>
<path d="M447.7 367.2 C448.3 367.1 450.2 366.8 451.5 366.8 C452.8 366.8 453.8 367.1 455.5 367.2 C457.2 367.3 459.9 367.3 462.0 367.6 C464.1 367.9 465.9 368.2 468.0 368.8 C470.1 369.3 472.4 370.0 474.5 370.8 C476.6 371.6 478.1 372.4 480.5 373.4 C482.9 374.4 487.6 376.4 489.0 377.0 L489 381 C487.2 380.8 481.2 380.3 478.0 379.8 C474.8 379.3 472.3 378.7 469.6 378.0 C466.9 377.3 464.4 376.6 462.0 375.7 C459.6 374.8 457.2 373.7 455.5 372.7 C453.8 371.7 452.8 370.7 451.5 369.8 C450.2 368.9 448.3 367.6 447.7 367.2Z" fill="url(#g3t)"/>
<path d="M381.3 327.3 C381.8 326.2 384.3 326.9 386.0 326.5 C387.7 326.1 388.4 326.3 391.4 325.0 C394.4 323.7 399.8 321.0 404.0 318.8 C408.2 316.5 412.5 313.7 416.4 311.7 C420.3 309.7 423.8 307.9 427.4 307.0 C431.0 306.1 434.7 305.7 438.3 306.0 C441.9 306.3 445.9 307.0 449.2 308.6 C452.6 310.2 456.4 312.9 458.6 315.6 C460.8 318.3 462.4 322.0 462.5 325.0 C462.6 328.0 461.3 330.9 459.4 333.6 C457.4 336.3 454.1 339.2 450.8 341.4 C447.6 343.6 442.9 345.3 439.9 346.9 C436.9 348.5 435.9 349.9 432.8 350.8 C429.7 351.7 424.5 351.1 421.0 352.3 C417.5 353.5 414.6 355.6 411.8 357.8 C408.9 360.0 406.6 363.2 404.0 365.6 C401.4 368.0 398.6 370.5 396.0 371.9 C393.4 373.3 390.6 374.7 388.3 374.2 C386.0 373.7 383.7 371.5 382.0 368.8 C380.3 366.0 378.6 362.0 378.2 357.8 C377.8 353.6 378.9 347.9 379.7 343.8 C380.5 339.6 382.5 335.7 382.8 333.0 C383.1 330.3 380.8 328.4 381.3 327.3Z" fill="url(#g3q)"/>
</g>
<g clip-path="url(#c4)">
<rect x="368.500" y="402" width="120" height="250" fill="url(#ck4)"/>
<circle cx="369" cy="402.500" r="24" fill="none" stroke="url(#g4r1)" stroke-width="2.600"/>
<text x="443.500" y="425.600" font-family="Liberation Serif, serif" font-style="italic" font-weight="bold" font-size="14.500" fill="#2a2a2a" textLength="32.500" lengthAdjust="spacingAndGlyphs"><tspan font-size="20" dy="1.200">Y</tspan><tspan dy="-1.200">our</tspan></text>
<text x="408.300" y="442.700" font-weight="bold" font-size="15.800" fill="#2c2c2c" stroke="#2c2c2c" stroke-width="0.400" textLength="67.200" lengthAdjust="spacingAndGlyphs">DESIGN</text>
<text x="408.800" y="450.200" font-weight="bold" font-size="5.600" fill="#2c2c2c" textLength="65" lengthAdjust="spacingAndGlyphs">www.yoursiteweb.com</text>
<path d="M489.0 496.5 C488.0 497.9 484.9 502.2 483.0 505.0 C481.1 507.8 479.3 510.6 477.4 513.4 C475.5 516.1 473.6 518.9 471.5 521.5 C469.4 524.1 467.3 526.5 464.9 529.0 C462.5 531.5 459.6 534.2 457.0 536.5 C454.4 538.8 451.5 540.8 449.2 543.0 C447.0 545.2 445.1 547.4 443.5 549.5 C441.9 551.6 440.8 553.9 439.9 555.6 C439.0 557.4 438.5 558.6 438.2 560.0 C437.9 561.4 438.0 562.7 438.3 564.0 C438.6 565.3 439.2 566.7 440.0 567.8 C440.8 568.9 441.8 569.8 443.0 570.5 C444.2 571.2 445.9 571.8 447.5 572.0 C449.1 572.2 450.3 572.3 452.4 572.0 C454.5 571.7 457.4 570.9 460.0 570.0 C462.6 569.1 465.6 567.8 468.0 566.6 C470.4 565.4 472.4 564.3 474.5 563.0 C476.6 561.7 478.1 560.2 480.5 558.8 C482.9 557.2 487.6 554.8 489.0 554.0Z" fill="url(#g4b)"/>
<path d="M368.0 562.3 C369.2 562.4 372.5 562.5 375.0 562.8 C377.5 563.1 380.6 563.4 383.0 564.2 C385.4 565.0 387.3 566.1 389.5 567.5 C391.7 568.9 393.9 570.8 396.0 572.8 C398.1 574.8 400.0 577.2 401.8 579.6 C403.6 582.0 405.2 584.8 407.0 586.9 C408.8 589.0 410.5 590.4 412.3 592.0 C414.1 593.6 415.9 595.3 418.0 596.2 C420.1 597.2 422.5 597.4 425.0 597.8 C427.5 598.2 430.3 598.7 432.8 598.8 C435.3 598.9 437.5 598.7 440.0 598.4 C442.5 598.1 445.2 597.6 447.7 597.0 C450.2 596.4 452.5 595.6 455.0 594.8 C457.5 594.0 460.2 593.1 462.7 592.3 C465.2 591.5 467.5 590.8 470.0 590.2 C472.5 589.6 474.4 588.9 477.6 588.6 C480.8 588.3 487.1 588.3 489.0 588.3 L489 652 L368 652Z" fill="#b6d916"/>
<path d="M368.0 527.5 C369.3 527.0 373.3 525.2 376.0 524.5 C378.7 523.8 381.4 523.2 384.0 523.2 C386.6 523.2 389.0 523.5 391.6 524.5 C394.2 525.5 397.0 527.1 399.5 529.0 C402.0 530.9 404.6 533.2 406.6 536.0 C408.6 538.8 409.9 542.5 411.5 546.0 C413.1 549.5 414.5 553.6 416.0 556.8 C417.5 560.0 419.0 562.5 420.5 565.0 C422.0 567.5 422.9 569.7 425.0 571.7 C427.1 573.7 430.2 575.6 433.0 577.0 C435.8 578.4 438.8 579.4 442.0 580.0 C445.2 580.6 448.6 580.5 452.0 580.5 C455.4 580.5 459.4 580.0 462.7 580.0 C465.9 580.0 468.7 580.0 471.5 580.2 C474.3 580.4 477.3 580.6 479.5 581.0 C481.7 581.4 482.9 581.9 484.5 582.5 C486.1 583.1 488.2 584.4 489.0 584.8 L489 588.300 C487.1 588.3 480.8 588.3 477.6 588.6 C474.4 588.9 472.5 589.6 470.0 590.2 C467.5 590.8 465.2 591.5 462.7 592.3 C460.2 593.1 457.5 594.0 455.0 594.8 C452.5 595.6 450.2 596.4 447.7 597.0 C445.2 597.6 442.5 598.1 440.0 598.4 C437.5 598.7 435.3 598.9 432.8 598.8 C430.3 598.7 427.5 598.2 425.0 597.8 C422.5 597.4 420.1 597.2 418.0 596.2 C415.9 595.3 414.1 593.6 412.3 592.0 C410.5 590.4 408.8 589.0 407.0 586.9 C405.2 584.8 403.6 582.0 401.8 579.6 C400.0 577.2 398.1 574.8 396.0 572.8 C393.9 570.8 391.7 568.9 389.5 567.5 C387.3 566.1 385.4 565.0 383.0 564.2 C380.6 563.4 377.5 563.1 375.0 562.8 C372.5 562.5 369.2 562.4 368.0 562.3Z" fill="#3a14e6"/>
<path d="M385 535 v10 M380 540 h10" stroke="#fff" stroke-width="3.200" fill="none"/>
<path d="M469.800 634.200 l7 7 M476.800 634.200 l-7 7" stroke="#f7fbe8" stroke-width="3" fill="none"/>
<circle cx="371.500" cy="598" r="15.500" fill="none" stroke="url(#g4r2)" stroke-width="2"/>
<circle cx="487.500" cy="612.800" r="14" fill="none" stroke="url(#g4r3)" stroke-width="2"/>
<path d="M424.500 614.300 L431.300 607.800 L438.300 614.300" fill="none" stroke="#3a4a14" stroke-width="1.300"/>
<text x="398.500" y="633" font-family="Liberation Serif, serif" font-style="italic" font-size="16.500" fill="#3a4a14" stroke="#3a4a14" stroke-width="0.300" textLength="59.500" lengthAdjust="spacingAndGlyphs">Swipe Up</text>
</g>
<text x="213" y="212.500" font-weight="bold" font-size="26.200" fill="#0c0c0c" stroke="#0c0c0c" stroke-width="0.800" textLength="96" lengthAdjust="spacingAndGlyphs">INSTAGRAM</text>
<text x="198.800" y="253" font-weight="bold" font-size="47.200" fill="#155fa8" stroke="#155fa8" stroke-width="1.300" textLength="122.800" lengthAdjust="spacingAndGlyphs">STORIES</text>
<text x="220.300" y="276.800" font-weight="bold" font-size="22.200" fill="#0c0c0c" stroke="#0c0c0c" stroke-width="0.700" textLength="81.400" lengthAdjust="spacingAndGlyphs">TEMPLATES</text>
<rect x="181.700" y="348.700" width="5" height="82.300" rx="1.500" fill="url(#gpb)"/>
<rect x="181" y="369.600" width="4.500" height="2.800" fill="#fcfcfc"/><rect x="181" y="400" width="4.500" height="2.400" fill="#fcfcfc"/>
<rect x="186.300" y="308.700" width="148.500" height="307.300" rx="12" fill="#fff" stroke="url(#gph)" stroke-width="2.700"/>
<use href="#scrp" fill="#9fc1e8"/>
<g clip-path="url(#scr)">
<g fill="#e4f0fc"><circle cx="296.0" cy="317.8" r="0.85"/><circle cx="301.7" cy="317.8" r="0.85"/><circle cx="307.4" cy="317.8" r="0.85"/><circle cx="313.1" cy="317.8" r="0.85"/><circle cx="318.8" cy="317.8" r="0.85"/><circle cx="324.5" cy="317.8" r="0.85"/><circle cx="296.0" cy="323.5" r="0.85"/><circle cx="301.7" cy="323.5" r="0.85"/><circle cx="307.4" cy="323.5" r="0.85"/><circle cx="313.1" cy="323.5" r="0.85"/><circle cx="318.8" cy="323.5" r="0.85"/><circle cx="324.5" cy="323.5" r="0.85"/><circle cx="296.0" cy="329.2" r="0.85"/><circle cx="301.7" cy="329.2" r="0.85"/><circle cx="307.4" cy="329.2" r="0.85"/><circle cx="313.1" cy="329.2" r="0.85"/><circle cx="318.8" cy="329.2" r="0.85"/><circle cx="324.5" cy="329.2" r="0.85"/><circle cx="296.0" cy="334.9" r="0.85"/><circle cx="301.7" cy="334.9" r="0.85"/><circle cx="307.4" cy="334.9" r="0.85"/><circle cx="313.1" cy="334.9" r="0.85"/><circle cx="318.8" cy="334.9" r="0.85"/><circle cx="324.5" cy="334.9" r="0.85"/><circle cx="296.0" cy="340.6" r="0.85"/><circle cx="301.7" cy="340.6" r="0.85"/><circle cx="307.4" cy="340.6" r="0.85"/><circle cx="313.1" cy="340.6" r="0.85"/><circle cx="318.8" cy="340.6" r="0.85"/><circle cx="324.5" cy="340.6" r="0.85"/><circle cx="296.0" cy="346.3" r="0.85"/><circle cx="301.7" cy="346.3" r="0.85"/><circle cx="307.4" cy="346.3" r="0.85"/><circle cx="313.1" cy="346.3" r="0.85"/><circle cx="318.8" cy="346.3" r="0.85"/><circle cx="324.5" cy="346.3" r="0.85"/><circle cx="296.0" cy="352.0" r="0.85"/><circle cx="301.7" cy="352.0" r="0.85"/><circle cx="307.4" cy="352.0" r="0.85"/><circle cx="313.1" cy="352.0" r="0.85"/><circle cx="318.8" cy="352.0" r="0.85"/><circle cx="324.5" cy="352.0" r="0.85"/><circle cx="296.0" cy="357.7" r="0.85"/><circle cx="301.7" cy="357.7" r="0.85"/><circle cx="307.4" cy="357.7" r="0.85"/><circle cx="313.1" cy="357.7" r="0.85"/><circle cx="318.8" cy="357.7" r="0.85"/><circle cx="324.5" cy="357.7" r="0.85"/><circle cx="296.0" cy="363.4" r="0.85"/><circle cx="301.7" cy="363.4" r="0.85"/><circle cx="307.4" cy="363.4" r="0.85"/><circle cx="313.1" cy="363.4" r="0.85"/><circle cx="318.8" cy="363.4" r="0.85"/><circle cx="324.5" cy="363.4" r="0.85"/></g>
<path d="M284.0 323.5 C282.8 324.8 279.3 328.8 277.0 331.5 C274.7 334.2 272.4 336.9 270.0 340.0 C267.6 343.1 264.7 347.0 262.8 349.8 C260.9 352.6 259.5 354.7 258.5 357.0 C257.5 359.3 257.0 361.8 257.0 363.6 C257.0 365.4 257.5 366.9 258.5 368.0 C259.5 369.1 261.1 370.2 262.8 370.4 C264.5 370.6 266.6 370.1 268.5 369.3 C270.4 368.5 271.8 367.4 274.0 365.8 C276.2 364.2 279.3 361.8 282.0 359.5 C284.7 357.2 287.5 354.5 290.0 352.0 C292.5 349.5 294.7 347.0 297.0 344.5 C299.3 342.0 301.8 339.0 304.0 337.0 C306.2 335.0 308.2 333.8 310.5 332.5 C312.8 331.2 315.6 329.9 317.7 329.0 C319.8 328.1 321.1 327.6 323.0 327.0 C324.9 326.4 328.0 325.6 329.0 325.3" fill="none" stroke="url(#gpt)" stroke-width="4.100" stroke-linecap="round"/>
<rect x="214.800" y="331.600" width="89.500" height="8.200" rx="4.100" fill="url(#gurl)"/>
<text x="220.600" y="338.300" font-weight="bold" font-size="7" fill="#fff" textLength="81.500" lengthAdjust="spacingAndGlyphs">www.yoursiteweb.com</text>
<path d="M192.0 475.8 C193.0 475.8 196.0 475.5 198.0 475.8 C200.0 476.1 201.8 476.6 204.0 477.4 C206.2 478.2 209.1 479.1 211.5 480.5 C213.9 481.9 216.4 483.3 218.4 485.6 C220.4 487.9 221.9 491.0 223.5 494.5 C225.1 498.0 226.8 502.6 227.8 506.8 C228.8 511.0 229.1 515.2 229.3 519.5 C229.5 523.8 229.5 528.5 229.0 532.7 C228.5 537.0 227.3 541.1 226.5 545.0 C225.7 548.9 224.7 552.7 224.3 556.0 C223.9 559.3 223.9 562.2 224.3 565.0 C224.7 567.8 225.3 570.3 226.6 572.7 C227.9 575.1 229.8 577.7 232.0 579.5 C234.2 581.3 236.4 582.6 239.6 583.3 C242.8 584.0 247.1 583.9 251.0 583.5 C254.9 583.1 259.0 582.2 263.0 581.0 C267.0 579.8 271.1 578.0 275.0 576.2 C278.9 574.4 282.9 572.3 286.7 570.4 C290.4 568.5 294.0 566.6 297.5 564.8 C301.0 563.0 304.5 561.1 307.9 559.8 C311.3 558.5 314.5 557.7 318.0 557.0 C321.5 556.3 327.2 556.0 329.0 555.8 L329 608 L192 608Z" fill="url(#gpp)"/>
<path d="M192.0 475.8 C193.0 475.8 196.0 475.5 198.0 475.8 C200.0 476.1 201.8 476.6 204.0 477.4 C206.2 478.2 209.1 479.1 211.5 480.5 C213.9 481.9 216.4 483.3 218.4 485.6 C220.4 487.9 221.9 491.0 223.5 494.5 C225.1 498.0 226.8 502.6 227.8 506.8 C228.8 511.0 229.1 515.2 229.3 519.5 C229.5 523.8 229.5 528.5 229.0 532.7 C228.5 537.0 227.3 541.1 226.5 545.0 C225.7 548.9 224.7 552.7 224.3 556.0 C223.9 559.3 223.9 562.2 224.3 565.0 C224.7 567.8 225.3 570.3 226.6 572.7 C227.9 575.1 229.8 577.7 232.0 579.5 C234.2 581.3 236.4 582.6 239.6 583.3 C242.8 584.0 247.1 583.9 251.0 583.5 C254.9 583.1 259.0 582.2 263.0 581.0 C267.0 579.8 271.1 578.0 275.0 576.2 C278.9 574.4 282.9 572.3 286.7 570.4 C290.4 568.5 294.0 566.6 297.5 564.8 C301.0 563.0 304.5 561.1 307.9 559.8 C311.3 558.5 314.5 557.7 318.0 557.0 C321.5 556.3 327.2 556.0 329.0 555.8 L329 608 L192 608Z" fill="url(#gpp2)"/>
<path d="M192.0 475.8 C193.0 475.8 196.0 475.5 198.0 475.8 C200.0 476.1 201.8 476.6 204.0 477.4 C206.2 478.2 209.1 479.1 211.5 480.5 C213.9 481.9 216.4 483.3 218.4 485.6 C220.4 487.9 221.9 491.0 223.5 494.5 C225.1 498.0 226.8 502.6 227.8 506.8 C228.8 511.0 229.1 515.2 229.3 519.5 C229.5 523.8 229.5 528.5 229.0 532.7 C228.5 537.0 227.3 541.1 226.5 545.0 C225.7 548.9 224.7 552.7 224.3 556.0 C223.9 559.3 223.9 562.2 224.3 565.0 C224.7 567.8 225.3 570.3 226.6 572.7 C227.9 575.1 229.8 577.7 232.0 579.5 C234.2 581.3 236.4 582.6 239.6 583.3 C242.8 584.0 247.1 583.9 251.0 583.5 C254.9 583.1 259.0 582.2 263.0 581.0 C267.0 579.8 271.1 578.0 275.0 576.2 C278.9 574.4 282.9 572.3 286.7 570.4 C290.4 568.5 294.0 566.6 297.5 564.8 C301.0 563.0 304.5 561.1 307.9 559.8 C311.3 558.5 314.5 557.7 318.0 557.0 C321.5 556.3 327.2 556.0 329.0 555.8" fill="none" stroke="#fff" stroke-width="3.700"/>
<clipPath id="cpp"><path d="M192.0 475.8 C193.0 475.8 196.0 475.5 198.0 475.8 C200.0 476.1 201.8 476.6 204.0 477.4 C206.2 478.2 209.1 479.1 211.5 480.5 C213.9 481.9 216.4 483.3 218.4 485.6 C220.4 487.9 221.9 491.0 223.5 494.5 C225.1 498.0 226.8 502.6 227.8 506.8 C228.8 511.0 229.1 515.2 229.3 519.5 C229.5 523.8 229.5 528.5 229.0 532.7 C228.5 537.0 227.3 541.1 226.5 545.0 C225.7 548.9 224.7 552.7 224.3 556.0 C223.9 559.3 223.9 562.2 224.3 565.0 C224.7 567.8 225.3 570.3 226.6 572.7 C227.9 575.1 229.8 577.7 232.0 579.5 C234.2 581.3 236.4 582.6 239.6 583.3 C242.8 584.0 247.1 583.9 251.0 583.5 C254.9 583.1 259.0 582.2 263.0 581.0 C267.0 579.8 271.1 578.0 275.0 576.2 C278.9 574.4 282.9 572.3 286.7 570.4 C290.4 568.5 294.0 566.6 297.5 564.8 C301.0 563.0 304.5 561.1 307.9 559.8 C311.3 558.5 314.5 557.7 318.0 557.0 C321.5 556.3 327.2 556.0 329.0 555.8 L329 608 L192 608Z"/></clipPath>
<g clip-path="url(#cpp)"><g fill="#fbe6f6"><circle cx="195.3" cy="546.8" r="1.05"/><circle cx="202.7" cy="546.8" r="1.05"/><circle cx="210.1" cy="546.8" r="1.05"/><circle cx="217.4" cy="546.8" r="1.05"/><circle cx="224.8" cy="546.8" r="1.05"/><circle cx="232.2" cy="546.8" r="1.05"/><circle cx="239.6" cy="546.8" r="1.05"/><circle cx="195.3" cy="554.6" r="1.05"/><circle cx="202.7" cy="554.6" r="1.05"/><circle cx="210.1" cy="554.6" r="1.05"/><circle cx="217.4" cy="554.6" r="1.05"/><circle cx="224.8" cy="554.6" r="1.05"/><circle cx="232.2" cy="554.6" r="1.05"/><circle cx="239.6" cy="554.6" r="1.05"/><circle cx="195.3" cy="562.4" r="1.05"/><circle cx="202.7" cy="562.4" r="1.05"/><circle cx="210.1" cy="562.4" r="1.05"/><circle cx="217.4" cy="562.4" r="1.05"/><circle cx="224.8" cy="562.4" r="1.05"/><circle cx="232.2" cy="562.4" r="1.05"/><circle cx="239.6" cy="562.4" r="1.05"/><circle cx="195.3" cy="570.2" r="1.05"/><circle cx="202.7" cy="570.2" r="1.05"/><circle cx="210.1" cy="570.2" r="1.05"/><circle cx="217.4" cy="570.2" r="1.05"/><circle cx="224.8" cy="570.2" r="1.05"/><circle cx="232.2" cy="570.2" r="1.05"/><circle cx="239.6" cy="570.2" r="1.05"/><circle cx="195.3" cy="578.0" r="1.05"/><circle cx="202.7" cy="578.0" r="1.05"/><circle cx="210.1" cy="578.0" r="1.05"/><circle cx="217.4" cy="578.0" r="1.05"/><circle cx="224.8" cy="578.0" r="1.05"/><circle cx="232.2" cy="578.0" r="1.05"/><circle cx="239.6" cy="578.0" r="1.05"/><circle cx="195.3" cy="585.8" r="1.05"/><circle cx="202.7" cy="585.8" r="1.05"/><circle cx="210.1" cy="585.8" r="1.05"/><circle cx="217.4" cy="585.8" r="1.05"/><circle cx="224.8" cy="585.8" r="1.05"/><circle cx="232.2" cy="585.8" r="1.05"/><circle cx="239.6" cy="585.8" r="1.05"/><circle cx="195.3" cy="593.6" r="1.05"/><circle cx="202.7" cy="593.6" r="1.05"/><circle cx="210.1" cy="593.6" r="1.05"/><circle cx="217.4" cy="593.6" r="1.05"/><circle cx="224.8" cy="593.6" r="1.05"/><circle cx="232.2" cy="593.6" r="1.05"/><circle cx="239.6" cy="593.6" r="1.05"/><circle cx="195.3" cy="601.4" r="1.05"/><circle cx="202.7" cy="601.4" r="1.05"/><circle cx="210.1" cy="601.4" r="1.05"/><circle cx="217.4" cy="601.4" r="1.05"/><circle cx="224.8" cy="601.4" r="1.05"/><circle cx="232.2" cy="601.4" r="1.05"/><circle cx="239.6" cy="601.4" r="1.05"/></g></g>
<rect x="246.600" y="508" width="120" height="49.500" rx="24.700" fill="#f6d10e"/>
<path d="M192.0 456.5 C193.3 456.2 197.6 455.2 200.0 455.0 C202.4 454.8 204.7 454.6 206.6 455.0 C208.5 455.4 210.0 456.2 211.5 457.5 C213.0 458.8 214.7 460.6 215.5 462.5 C216.3 464.4 216.8 466.5 216.5 469.0 C216.2 471.5 214.8 474.7 213.5 477.5 C212.2 480.3 210.8 482.8 209.0 485.6 C207.2 488.4 205.0 491.8 203.0 494.5 C201.0 497.2 198.8 499.8 197.0 502.0 C195.2 504.2 192.8 506.6 192.0 507.5" fill="none" stroke="#18a2b0" stroke-width="3"/>
<path d="M192.0 536.5 C193.2 535.4 196.6 532.2 199.0 530.0 C201.4 527.8 204.0 525.5 206.6 523.0 C209.2 520.5 211.8 517.5 214.5 514.8 C217.2 512.1 220.4 508.9 223.0 506.8 C225.6 504.7 227.7 503.4 230.0 502.0 C232.3 500.6 234.2 499.6 237.0 498.6 C239.8 497.6 243.4 496.8 247.0 496.2 C250.6 495.6 254.1 495.2 258.4 495.0 C262.7 494.8 267.9 494.8 273.0 494.8 C278.1 494.8 284.3 495.1 289.0 495.0 C293.7 494.9 297.1 494.7 301.0 494.3 C304.9 493.9 309.3 493.3 312.6 492.7 C315.9 492.1 318.3 491.4 321.0 490.5 C323.7 489.6 327.7 488.0 329.0 487.5" fill="none" stroke="url(#gpl)" stroke-width="3"/>
<text x="272.300" y="530.300" font-weight="bold" font-size="14.800" fill="#0a0a0a" stroke="#0a0a0a" stroke-width="0.500" textLength="43.300" lengthAdjust="spacingAndGlyphs">YOUR</text>
<text x="261.800" y="546.400" font-weight="bold" font-size="17.400" fill="#0a0a0a" stroke="#0a0a0a" stroke-width="0.600" textLength="53.300" lengthAdjust="spacingAndGlyphs">TEXT</text>
</g>
<text x="170.200" y="691.800" font-size="17.400" fill="#1c2630" stroke="#1c2630" stroke-width="0.250" textLength="93.400" lengthAdjust="spacingAndGlyphs">designed by</text>
<g transform="translate(270.500,674)"><path d="M9.300 3.200 V0.800 M5.200 4.600 L2.600 2.400 M13.400 4.600 L16 2.400 M2.300 8.200 L0.300 7.600" stroke="#1c2630" stroke-width="1.100" fill="none"/><circle cx="9.300" cy="0.900" r="0.900" fill="#1c2630"/><ellipse cx="9.300" cy="11.600" rx="8.300" ry="7.300" fill="#1c2630"/><ellipse cx="6" cy="10.200" rx="2.500" ry="2.300" fill="#fff"/><ellipse cx="12.600" cy="10.200" rx="2.500" ry="2.300" fill="#fff"/><circle cx="6.300" cy="10.400" r="1" fill="#1c2630"/><circle cx="12.300" cy="10.400" r="1" fill="#1c2630"/><path d="M3.500 14.600 Q9.300 17.800 15.100 14.600" stroke="#fff" stroke-width="0.900" fill="none"/></g>
<text x="294.800" y="691.800" font-weight="bold" font-size="17.200" fill="#1c2630" stroke="#1c2630" stroke-width="0.450" textLength="54.800" lengthAdjust="spacingAndGlyphs">freepik</text>
</svg>
<!--ART-END-->
  </div>
  <div id="leftedge" class="abs"></div>
  <div id="vscroll" class="abs"></div>
  <div id="statusbar" class="abs"></div>
  <div id="dock" class="abs"></div>
  <div id="iconcol" class="abs"></div>


  <div class="abs" style="left:531px;top:45px;width:2px;height:677px;background:#2f2f2f"></div>
  <div class="abs" style="left:557.5px;top:52px;width:1.500px;height:670px;background:#303030"></div>
<div class="abs" style="left:539px;top:55px;width:12px;height:2px;background:repeating-linear-gradient(90deg,#262626 0 2px,#474747 2px 3px)"></div>
  <svg class="abs" style="left:539.3px;top:61.8px;opacity:.92" width="12.4" height="12.4" viewBox="0 0 14 14"><path d="M1 8 C1 4 5 2.500 8.500 3 C12 3.500 13.500 6 12.500 8 C11.500 10 9.500 9 8.500 10 C8 11 6 12 4 11.500 C2 11 1 9.500 1 8Z" fill="#d6d6d6"/><circle cx="4" cy="7" r="1.100" fill="#474747"/><circle cx="6.500" cy="5.200" r="1.100" fill="#474747"/><circle cx="9.500" cy="5.500" r="1.100" fill="#474747"/><circle cx="5.500" cy="9.500" r="1.100" fill="#474747"/></svg>
  <svg class="abs" style="left:539.3px;top:79.8px;opacity:.92" width="12.4" height="12.4" viewBox="0 0 14 14"><defs><linearGradient id="cg" x1="0" y1="0" x2="1" y2="1"><stop offset="0" stop-color="#efefef"/><stop offset="1" stop-color="#3a3a3a"/></linearGradient></defs><path d="M2 1.500 V12.500 H12.500 C12.500 7 8 2 2 1.500Z" fill="url(#cg)" stroke="#d8d8d8" stroke-width="0.800"/></svg>
  <div class="abs" style="left:533px;top:96px;width:25px;height:1px;background:#333"></div>
  <div class="abs" style="left:539px;top:99px;width:12px;height:2px;background:repeating-linear-gradient(90deg,#262626 0 2px,#474747 2px 3px)"></div>
  <svg class="abs" style="left:539.3px;top:103.8px;opacity:.92" width="12.4" height="12.4" viewBox="0 0 14 14"><rect x="4.500" y="8" width="5" height="5" fill="#cfcfcf"/><path d="M7 8 V2 M5 8 L3.500 3.500 M9 8 L10.500 3.500" stroke="#cfcfcf" stroke-width="1.300"/><ellipse cx="7" cy="2.500" rx="1" ry="1.800" fill="#dedede"/><ellipse cx="3.500" cy="4" rx="1" ry="1.600" fill="#dedede"/><ellipse cx="10.500" cy="4" rx="1" ry="1.600" fill="#dedede"/></svg>
  <svg class="abs" style="left:539.3px;top:122.3px;opacity:.92" width="12.4" height="12.4" viewBox="0 0 14 14"><rect x="1.500" y="3" width="11" height="8" fill="#c9c9c9"/><rect x="2.500" y="4" width="2.500" height="2.500" fill="#222"/><rect x="6" y="4" width="2.500" height="2.500" fill="#666"/><rect x="9.300" y="4" width="2.500" height="2.500" fill="#eee"/><rect x="2.500" y="7.500" width="2.500" height="2.500" fill="#888"/><rect x="6" y="7.500" width="2.500" height="2.500" fill="#eee"/><rect x="9.300" y="7.500" width="2.500" height="2.500" fill="#444"/></svg>
  <svg class="abs" style="left:539.3px;top:140.3px;opacity:.92" width="12.4" height="12.4" viewBox="0 0 14 14"><circle cx="7" cy="4" r="2.600" fill="#d2d2d2"/><circle cx="4" cy="8" r="2.600" fill="#d2d2d2"/><circle cx="10" cy="8" r="2.600" fill="#d2d2d2"/><path d="M7 6 L5.500 13 H8.500Z" fill="#d2d2d2"/></svg>
  <div class="abs" style="left:533px;top:157px;width:25px;height:1px;background:#333"></div>
  <div class="abs" style="left:539px;top:160px;width:12px;height:2px;background:repeating-linear-gradient(90deg,#262626 0 2px,#474747 2px 3px)"></div>
  <svg class="abs" style="left:539.3px;top:164.8px;opacity:.92" width="12.4" height="12.4" viewBox="0 0 14 14"><path d="M1.500 3 H12.500" stroke="#d8d8d8" stroke-width="0.800"/><path d="M1.500 6.500 H12.500" stroke="#d8d8d8" stroke-width="1.500"/><path d="M1.500 10.800 H12.500" stroke="#d8d8d8" stroke-width="2.400"/></svg>
  <svg class="abs" style="left:539.3px;top:183.8px;opacity:.92" width="12.4" height="12.4" viewBox="0 0 14 14"><defs><linearGradient id="gr" x1="0" y1="0" x2="1" y2="0"><stop offset="0" stop-color="#2e2e2e"/><stop offset="1" stop-color="#f2f2f2"/></linearGradient></defs><rect x="1.500" y="3" width="11" height="8" fill="url(#gr)" stroke="#d0d0d0" stroke-width="0.800"/></svg>
  <svg class="abs" style="left:539.3px;top:202.8px;opacity:.92" width="12.4" height="12.4" viewBox="0 0 14 14"><circle cx="5.500" cy="5.500" r="4" fill="#bdbdbd"/><circle cx="8.500" cy="8.500" r="4" fill="#dcdcdc" fill-opacity="0.700" stroke="#e6e6e6" stroke-width="0.600"/></svg>
  <div class="abs" style="left:533px;top:219px;width:25px;height:1px;background:#333"></div>
  <div class="abs" style="left:539px;top:222px;width:12px;height:2px;background:repeating-linear-gradient(90deg,#262626 0 2px,#474747 2px 3px)"></div>
  <svg class="abs" style="left:539.3px;top:227.8px;opacity:.92" width="12.4" height="12.4" viewBox="0 0 14 14"><circle cx="7" cy="7" r="3.300" fill="#cdcdcd"/><circle cx="7" cy="7" r="5.300" fill="none" stroke="#cdcdcd" stroke-width="1.200" stroke-dasharray="1 1.100"/></svg>
  <svg class="abs" style="left:539.3px;top:245.8px;opacity:.92" width="12.4" height="12.4" viewBox="0 0 14 14"><rect x="5.500" y="2.500" width="6" height="6" fill="none" stroke="#cdcdcd" stroke-width="0.900" stroke-dasharray="1.200 0.800"/><rect x="2.500" y="6" width="5" height="5" fill="#5a5a5a" stroke="#dddddd" stroke-width="0.900"/></svg>
  <div class="abs" style="left:533px;top:263px;width:25px;height:1px;background:#333"></div>
  <div class="abs" style="left:539px;top:266px;width:12px;height:2px;background:repeating-linear-gradient(90deg,#262626 0 2px,#474747 2px 3px)"></div>
  <div class="pt" style="left:540px;top:271px;font-size:12px;color:#dcdcdc">A<span style="font-weight:normal;position:relative;left:-1px;top:-0.500px">|</span></div>
  <div class="pt" style="left:541px;top:288.500px;font-size:12px;color:#dcdcdc;font-weight:bold">¶</div>
  <div class="pt" style="left:541px;top:305px;font-size:13px;color:#dcdcdc;font-family:'Liberation Serif',serif;font-style:italic">O</div>
  <div class="abs" style="left:533px;top:323px;width:25px;height:1px;background:#333"></div>
  <div class="abs" style="left:539px;top:326px;width:12px;height:2px;background:repeating-linear-gradient(90deg,#262626 0 2px,#474747 2px 3px)"></div>
  <svg class="abs" style="left:539.3px;top:332.8px;opacity:.92" width="12.4" height="12.4" viewBox="0 0 14 14"><rect x="3.500" y="3.500" width="7" height="7" fill="none" stroke="#d6d6d6" stroke-width="0.900" stroke-dasharray="1.400 0.900"/><path d="M1 3.500 h2 M3.500 1 v2 M11 3.500 h2 M10.500 1 v2 M1 10.500 h2 M3.500 11 v2 M11 10.500 h2 M10.500 11 v2" stroke="#d6d6d6" stroke-width="0.900"/></svg>
  <svg class="abs" style="left:539.3px;top:350.3px;opacity:.92" width="12.4" height="12.4" viewBox="0 0 14 14"><path d="M2.500 2 V12" stroke="#e2e2e2" stroke-width="1"/><rect x="3.500" y="3" width="5" height="3" fill="#d2d2d2"/><rect x="3.500" y="8" width="8" height="3" fill="#d2d2d2"/></svg>
  <svg class="abs" style="left:539.3px;top:367.8px;opacity:.92" width="12.4" height="12.4" viewBox="0 0 14 14"><rect x="2" y="2.500" width="6" height="6" fill="#5c5c5c" stroke="#e0e0e0" stroke-width="1"/><rect x="6" y="6" width="6" height="6" fill="#c8c8c8" stroke="#e0e0e0" stroke-width="0.600"/></svg>
  <div class="abs" style="left:533px;top:384px;width:25px;height:1px;background:#333"></div>
  <div class="abs" style="left:539px;top:388px;width:12px;height:2px;background:repeating-linear-gradient(90deg,#262626 0 2px,#474747 2px 3px)"></div>
  <svg class="abs" style="left:539.3px;top:394.3px;opacity:.92" width="12.4" height="12.4" viewBox="0 0 14 14"><circle cx="7" cy="7" r="5.200" fill="#bdbdbd"/><circle cx="7" cy="7" r="3.300" fill="#a9a9a9"/><path d="M7 1 l2 2.300 h-4z M13 7 l-2.300 2 v-4z M7 13 l2 -2.300 h-4z" fill="#efefef"/></svg>
  <div class="abs" style="left:533px;top:410px;width:25px;height:1px;background:#333"></div>
  <!-- vscroll -->
  <div class="abs" style="left:523px;top:61px;border:3.500px solid transparent;border-bottom:4px solid #ececec;border-top:0"></div>
  <div class="abs" style="left:523px;top:701px;border:3.500px solid transparent;border-top:4px solid #ececec;border-bottom:0"></div>
  <div class="abs" style="left:521.5px;top:378px;width:9.500px;height:9.500px;background:#8c8c8c"></div>
  <!-- status bar -->
  <div class="abs" style="left:270px;top:709px;width:261px;height:13px;background:#2b2b2b"></div>
  <div class="abs" style="left:0;top:720.5px;width:531px;height:1.500px;background:#2a2a2a"></div>
  <div class="abs" style="left:5px;top:710px;width:28px;height:10px;background:#c6c6c6;border:1px solid #333;color:#222;font-size:6.200px;line-height:10px;padding-left:1.500px">200%</div>
  <div class="abs" style="left:33px;top:710px;width:8px;height:10px;background:#7e7e7e;border:1px solid #333"><div style="position:absolute;left:1px;top:3px;border:2px solid transparent;border-top:3px solid #f4f4f4;border-bottom:0"></div></div>
  <svg class="abs" style="left:46px;top:711px" width="20" height="8" viewBox="0 0 20 8"><path d="M2 1 v6" stroke="#5e5e5e" stroke-width="1"/><path d="M7 1 v6 l-4 -3z M16 1 v6 l-4 -3z" fill="#5e5e5e"/></svg>
  <div class="abs" style="left:69px;top:710px;width:27px;height:10px;background:#c6c6c6;border:1px solid #333;color:#222;font-size:6.200px;line-height:10px;padding-left:2px">1</div>
  <div class="abs" style="left:96px;top:710px;width:8px;height:10px;background:#7e7e7e;border:1px solid #333"><div style="position:absolute;left:1px;top:3px;border:2px solid transparent;border-top:3px solid #f4f4f4;border-bottom:0"></div></div>
  <svg class="abs" style="left:109px;top:711px" width="20" height="8" viewBox="0 0 20 8"><path d="M17.500 1 v6" stroke="#5e5e5e" stroke-width="1"/><path d="M3 1 v6 l4 -3z M12 1 v6 l4 -3z" fill="#5e5e5e"/></svg>
  <div class="pt" style="left:173px;top:712px;font-size:6px;color:#eaeaea">Direct Selection</div>
  <div class="abs" style="left:260px;top:710px;width:8px;height:10px;background:#5a5a5a"></div>
  <div class="abs" style="left:262.5px;top:712px;border:2.500px solid transparent;border-left:4px solid #f0f0f0;border-right:0"></div>
  <div class="abs" style="left:273px;top:712px;border:2.500px solid transparent;border-right:4px solid #f0f0f0;border-left:0"></div>
  <div class="abs" style="left:513px;top:712px;border:2.500px solid transparent;border-left:4px solid #f0f0f0;border-right:0"></div>
  <div class="abs" style="left:391px;top:710px;width:9.500px;height:9.500px;background:#8c8c8c"></div>
  <div class="abs" style="left:521px;top:709px;width:10px;height:11px;background:#454545"></div>
  <!-- dock header -->
  <div class="abs" style="left:531px;top:45px;width:237px;height:7px;background:#2f2f2f"></div>
  <svg class="abs" style="left:548px;top:46px" width="7" height="5" viewBox="0 0 7 5"><path d="M3 0 v5 l-3 -2.500z M6.500 0 v5 l-3 -2.500z" fill="#c4c4c4"/></svg>
  <svg class="abs" style="left:756px;top:46px" width="7" height="5" viewBox="0 0 7 5"><path d="M0.500 0 v5 l3 -2.500z M4 0 v5 l3 -2.500z" fill="#c4c4c4"/></svg>
  <!-- info panel -->
  <div class="abs" style="left:559px;top:52px;width:207px;height:11px;background:#3a3a3a"></div>
  <div class="abs panel" style="left:559px;top:52px;width:26px;height:11px"></div>
  <svg class="abs" style="left:561.5px;top:55.5px" width="4" height="7" viewBox="0 0 4 7"><path d="M0.300 2.800 L2 0.500 L3.700 2.800 M0.300 4.200 L2 6.500 L3.700 4.200" fill="none" stroke="#e0e0e0" stroke-width="0.800"/></svg><div class="pt" style="left:566.5px;top:55.300px;font-weight:bold">Info</div>
  <div class="pt dim" style="left:588px;top:55.300px">Navigator</div>
  <svg class="abs" style="left:752px;top:55px" width="9" height="6" viewBox="0 0 9 6"><path d="M0 1 h2.4 l-1.2 1.6z" fill="#ccc"/><path d="M3.5 0.5 h5 M3.5 2.5 h5 M3.5 4.5 h5" stroke="#b0b0b0" stroke-width="0.7"/></svg>
  <div class="abs panel" style="left:559px;top:63px;width:207px;height:120px"></div>
  <div class="abs" style="left:653.5px;top:64px;width:1px;height:24px;background:#414141"></div>
  <div class="abs" style="left:653.5px;top:97px;width:1px;height:30px;background:#414141"></div>
  <div class="abs" style="left:653.5px;top:136px;width:1px;height:40px;background:#414141"></div>
  <div class="abs" style="left:563px;top:92px;width:180px;height:1px;background:#464646"></div>
  <div class="abs" style="left:563px;top:131px;width:180px;height:1px;background:#464646"></div>
  <svg class="abs" style="left:566px;top:72px" width="11" height="11" viewBox="0 0 11 11"><path d="M5.5 0.5 v10 M0.5 5.5 h10" stroke="#b4b4b4" stroke-width="0.7"/></svg>
  <div class="pt" style="left:588px;top:67.5px">X:</div><div class="pt" style="left:599.5px;top:67.5px">435 px</div>
  <div class="pt" style="left:588px;top:79px">Y:</div><div class="pt" style="left:599.5px;top:79px">41 px</div>
  <svg class="abs" style="left:663px;top:73px" width="12" height="11" viewBox="0 0 12 11"><path d="M2.5 3 v6 h6" fill="none" stroke="#c9c9c9" stroke-width="0.9" stroke-dasharray="1.5 1"/><path d="M2.5 3 h6 v6" fill="none" stroke="#c9c9c9" stroke-width="0.9" stroke-dasharray="1.5 1"/><path d="M8 1 l2 1.5 -2 1.5z M1 8.5 l1.5 2 1.5 -2z" fill="#d8d8d8"/></svg>
  <div class="pt" style="left:686px;top:67.5px">W:</div><div class="pt" style="left:699px;top:67.5px">0 px</div>
  <div class="pt" style="left:688px;top:81px">H:</div><div class="pt" style="left:699px;top:81px">0 px</div>
  <div class="pt" style="left:588px;top:136px">R:</div><div class="pt" style="left:598px;top:136px">0</div>
  <div class="pt" style="left:588px;top:147.5px">G:</div><div class="pt" style="left:598px;top:147.5px">0</div>
  <div class="pt" style="left:588px;top:158.5px">B:</div><div class="pt" style="left:598px;top:158.5px">0</div>
  <div class="pt" style="left:588px;top:170px">#:</div><div class="pt" style="left:598px;top:170px">000000</div>
  <div class="abs" style="left:567px;top:153px;width:8px;height:7px;background:#bdbdbd;border:1px solid #e0e0e0"><div style="position:absolute;left:1px;top:1px;width:4px;height:3px;background:#777"></div></div>
  <div class="abs" style="left:667px;top:152.5px;width:7px;height:7px;border:1px solid #dadada"></div>
  <!-- layers panel -->
  <div class="abs" style="left:559px;top:183px;width:207px;height:11px;background:#3a3a3a;border-top:1px solid #2e2e2e"></div>
  <div class="abs panel" style="left:559px;top:184px;width:27px;height:10px"></div>
  <div class="pt" style="left:563px;top:185.5px;font-weight:bold">Layers</div>
  <div class="pt dim" style="left:590px;top:185.5px">Actions</div>
  <div class="pt dim" style="left:622px;top:185.5px">Links</div>
  <svg class="abs" style="left:752px;top:186px" width="9" height="6" viewBox="0 0 9 6"><path d="M0 1 h2.4 l-1.2 1.6z" fill="#ccc"/><path d="M3.5 0.5 h5 M3.5 2.5 h5 M3.5 4.5 h5" stroke="#b0b0b0" stroke-width="0.7"/></svg>
  <div class="abs panel" style="left:559px;top:194px;width:207px;height:526px"></div>
  <div class="abs" style="left:562px;top:196px;width:199px;height:511px;border:1px solid #3a3a3a;background:#494949"></div>
  
  
  <div class="row" style="top:198.00px"><svg class="eye" width="9" height="7" viewBox="0 0 9 7"><path d="M0.5 3.5 Q4.5 -0.8 8.5 3.5 Q4.5 7.2 0.5 3.5Z" fill="#dcdcdc"/><circle cx="4.5" cy="3.3" r="1.6" fill="#4a4a4a"/><circle cx="4.5" cy="3.3" r="0.7" fill="#dcdcdc"/></svg><div class="vl" style="left:13px"></div><div class="vl" style="left:26px"></div><div class="bar" style="background:#5560d4"></div><div class="tri" style="left:34px"></div><div class="th" style="left:44px"><div style="position:absolute;left:0;top:4px;width:10px;height:1.5px;background:#333"></div></div><div class="nm" style="left:58px">DESIGNED BY FREEPIK</div><div class="vs"></div><div class="circ"></div></div>
  <div class="row" style="top:211.35px"><svg class="eye" width="9" height="7" viewBox="0 0 9 7"><path d="M0.5 3.5 Q4.5 -0.8 8.5 3.5 Q4.5 7.2 0.5 3.5Z" fill="#dcdcdc"/><circle cx="4.5" cy="3.3" r="1.6" fill="#4a4a4a"/><circle cx="4.5" cy="3.3" r="0.7" fill="#dcdcdc"/></svg><div class="vl" style="left:13px"></div><div class="vl" style="left:26px"></div><div class="bar" style="background:#5560d4"></div><div class="trid" style="left:33px"></div><div class="th" style="left:44px"><div style="position:absolute;left:1px;top:1px;width:3px;height:4px;background:#4a7fd6"></div><div style="position:absolute;left:6px;top:1px;width:3px;height:4px;background:#d8407a"></div><div style="position:absolute;left:1px;top:6px;width:3px;height:3px;background:#8a3aa8"></div><div style="position:absolute;left:6px;top:6px;width:3px;height:3px;background:#9ac43a"></div><div style="position:absolute;left:4px;top:3px;width:2px;height:5px;background:#8fb2e0"></div></div><div class="nm" style="left:58px">OBJECTS</div><div class="vs"></div><div class="circ"></div></div>
  <div class="row g" style="top:224.70px"><svg class="eye" width="9" height="7" viewBox="0 0 9 7"><path d="M0.5 3.5 Q4.5 -0.8 8.5 3.5 Q4.5 7.2 0.5 3.5Z" fill="#dcdcdc"/><circle cx="4.5" cy="3.3" r="1.6" fill="#4a4a4a"/><circle cx="4.5" cy="3.3" r="0.7" fill="#dcdcdc"/></svg><div class="vl" style="left:13px"></div><div class="vl" style="left:26px"></div><div class="bar" style="background:#5560d4"></div><div class="tri" style="left:46px"></div><div class="th" style="left:56px"><div style="position:absolute;left:3px;top:1px;width:4px;height:8px;background:#4aa6e8"></div><div style="position:absolute;left:4px;top:3px;width:2px;height:4px;background:#c8e048"></div></div><div class="nm" style="left:71px">&lt;Group&gt;</div><div class="vs"></div><div class="circ"></div></div>
  <div class="row g" style="top:238.05px"><svg class="eye" width="9" height="7" viewBox="0 0 9 7"><path d="M0.5 3.5 Q4.5 -0.8 8.5 3.5 Q4.5 7.2 0.5 3.5Z" fill="#dcdcdc"/><circle cx="4.5" cy="3.3" r="1.6" fill="#4a4a4a"/><circle cx="4.5" cy="3.3" r="0.7" fill="#dcdcdc"/></svg><div class="vl" style="left:13px"></div><div class="vl" style="left:26px"></div><div class="bar" style="background:#5560d4"></div><div class="tri" style="left:46px"></div><div class="th" style="left:56px"><div style="position:absolute;left:3px;top:1px;width:4px;height:8px;background:#e9d9cf"></div><div style="position:absolute;left:4px;top:3px;width:2px;height:4px;background:#7a3a78"></div></div><div class="nm" style="left:71px">&lt;Group&gt;</div><div class="vs"></div><div class="circ"></div></div>
  <div class="row g" style="top:251.40px"><svg class="eye" width="9" height="7" viewBox="0 0 9 7"><path d="M0.5 3.5 Q4.5 -0.8 8.5 3.5 Q4.5 7.2 0.5 3.5Z" fill="#dcdcdc"/><circle cx="4.5" cy="3.3" r="1.6" fill="#4a4a4a"/><circle cx="4.5" cy="3.3" r="0.7" fill="#dcdcdc"/></svg><div class="vl" style="left:13px"></div><div class="vl" style="left:26px"></div><div class="bar" style="background:#5560d4"></div><div class="tri" style="left:46px"></div><div class="th" style="left:56px"><div style="position:absolute;left:3px;top:1px;width:4px;height:8px;background:#f0d8dc"></div><div style="position:absolute;left:4px;top:3px;width:2px;height:4px;background:#c83c70"></div></div><div class="nm" style="left:71px">&lt;Group&gt;</div><div class="vs"></div><div class="circ"></div></div>
  <div class="row g" style="top:264.75px"><svg class="eye" width="9" height="7" viewBox="0 0 9 7"><path d="M0.5 3.5 Q4.5 -0.8 8.5 3.5 Q4.5 7.2 0.5 3.5Z" fill="#dcdcdc"/><circle cx="4.5" cy="3.3" r="1.6" fill="#4a4a4a"/><circle cx="4.5" cy="3.3" r="0.7" fill="#dcdcdc"/></svg><div class="vl" style="left:13px"></div><div class="vl" style="left:26px"></div><div class="bar" style="background:#5560d4"></div><div class="tri" style="left:46px"></div><div class="th" style="left:56px"><div style="position:absolute;left:3px;top:1px;width:4px;height:8px;background:#e8a8b8"></div><div style="position:absolute;left:4px;top:3px;width:2px;height:4px;background:#c03060"></div></div><div class="nm" style="left:71px">&lt;Group&gt;</div><div class="vs"></div><div class="circ"></div></div>
  <div class="row g" style="top:278.10px"><svg class="eye" width="9" height="7" viewBox="0 0 9 7"><path d="M0.5 3.5 Q4.5 -0.8 8.5 3.5 Q4.5 7.2 0.5 3.5Z" fill="#dcdcdc"/><circle cx="4.5" cy="3.3" r="1.6" fill="#4a4a4a"/><circle cx="4.5" cy="3.3" r="0.7" fill="#dcdcdc"/></svg><div class="vl" style="left:13px"></div><div class="vl" style="left:26px"></div><div class="bar" style="background:#5560d4"></div><div class="tri" style="left:46px"></div><div class="th" style="left:56px"><div style="position:absolute;left:3px;top:1px;width:4px;height:8px;background:#9cc8ec"></div><div style="position:absolute;left:4px;top:3px;width:2px;height:4px;background:#4a86d8"></div></div><div class="nm" style="left:71px">&lt;Group&gt;</div><div class="vs"></div><div class="circ"></div></div>
  <div class="row g" style="top:291.45px"><svg class="eye" width="9" height="7" viewBox="0 0 9 7"><path d="M0.5 3.5 Q4.5 -0.8 8.5 3.5 Q4.5 7.2 0.5 3.5Z" fill="#dcdcdc"/><circle cx="4.5" cy="3.3" r="1.6" fill="#4a4a4a"/><circle cx="4.5" cy="3.3" r="0.7" fill="#dcdcdc"/></svg><div class="vl" style="left:13px"></div><div class="vl" style="left:26px"></div><div class="bar" style="background:#5560d4"></div><div class="tri" style="left:46px"></div><div class="th" style="left:56px"><div style="position:absolute;left:0;top:0;width:10px;height:10px;background:#2a3a8a"></div><div style="position:absolute;left:1px;top:3px;width:8px;height:4px;background:#8fb6ea"></div></div><div class="nm" style="left:71px">&lt;Group&gt;</div><div class="vs"></div><div class="circ"></div></div>
  <div class="row" style="top:304.80px"><svg class="eye" width="9" height="7" viewBox="0 0 9 7"><path d="M0.5 3.5 Q4.5 -0.8 8.5 3.5 Q4.5 7.2 0.5 3.5Z" fill="#dcdcdc"/><circle cx="4.5" cy="3.3" r="1.6" fill="#4a4a4a"/><circle cx="4.5" cy="3.3" r="0.7" fill="#dcdcdc"/></svg><div class="vl" style="left:13px"></div><div class="vl" style="left:26px"></div><div class="bar" style="background:#e04848"></div><svg style="position:absolute;left:16px;top:2.5px" width="7" height="8" viewBox="0 0 7 8"><rect x="1" y="3.5" width="5" height="4" fill="#d6d6d6"/><path d="M2 3.5 V2.2 A1.5 1.5 0 0 1 5 2.2 V3.5" fill="none" stroke="#d6d6d6" stroke-width="1"/></svg><div class="tri" style="left:34px"></div><div class="th" style="left:44px"></div><div class="nm" style="left:58px">BACKGROUND</div><div class="vs"></div><div class="circ"></div></div>
  <div class="abs" style="left:758px;top:216px;border:1.5px solid transparent;border-right:2px solid #ddd;border-bottom:2px solid #ddd;border-left:0;border-top:0;width:0;height:0"></div>
  <div class="pt" style="left:562px;top:709.5px;font-weight:bold;font-size:6.2px">3 Layers</div>
  <svg class="abs" style="left:672px;top:708px" width="80" height="10" viewBox="0 0 80 10"><g fill="none" stroke="#6c6c6c" stroke-width="1"><circle cx="6" cy="4" r="2.5"/><path d="M4 6 L1.5 9"/><rect x="17.500" y="2.500" width="5" height="5"/><path d="M34 3 h5 v4 h-4"/><rect x="69" y="3.500" width="5" height="5"/><path d="M68 3.500 h7"/></g><path d="M51 1.500 h7 v7 h-4 v-3 h-3z" fill="#e4e4e4"/></svg>
  <div class="abs" style="left:531px;top:720px;width:237px;height:2px;background:#2f2f2f"></div>
  <div class="abs" style="left:766px;top:52px;width:2px;height:670px;background:#333"></div>

</div>
</body>
</html>
